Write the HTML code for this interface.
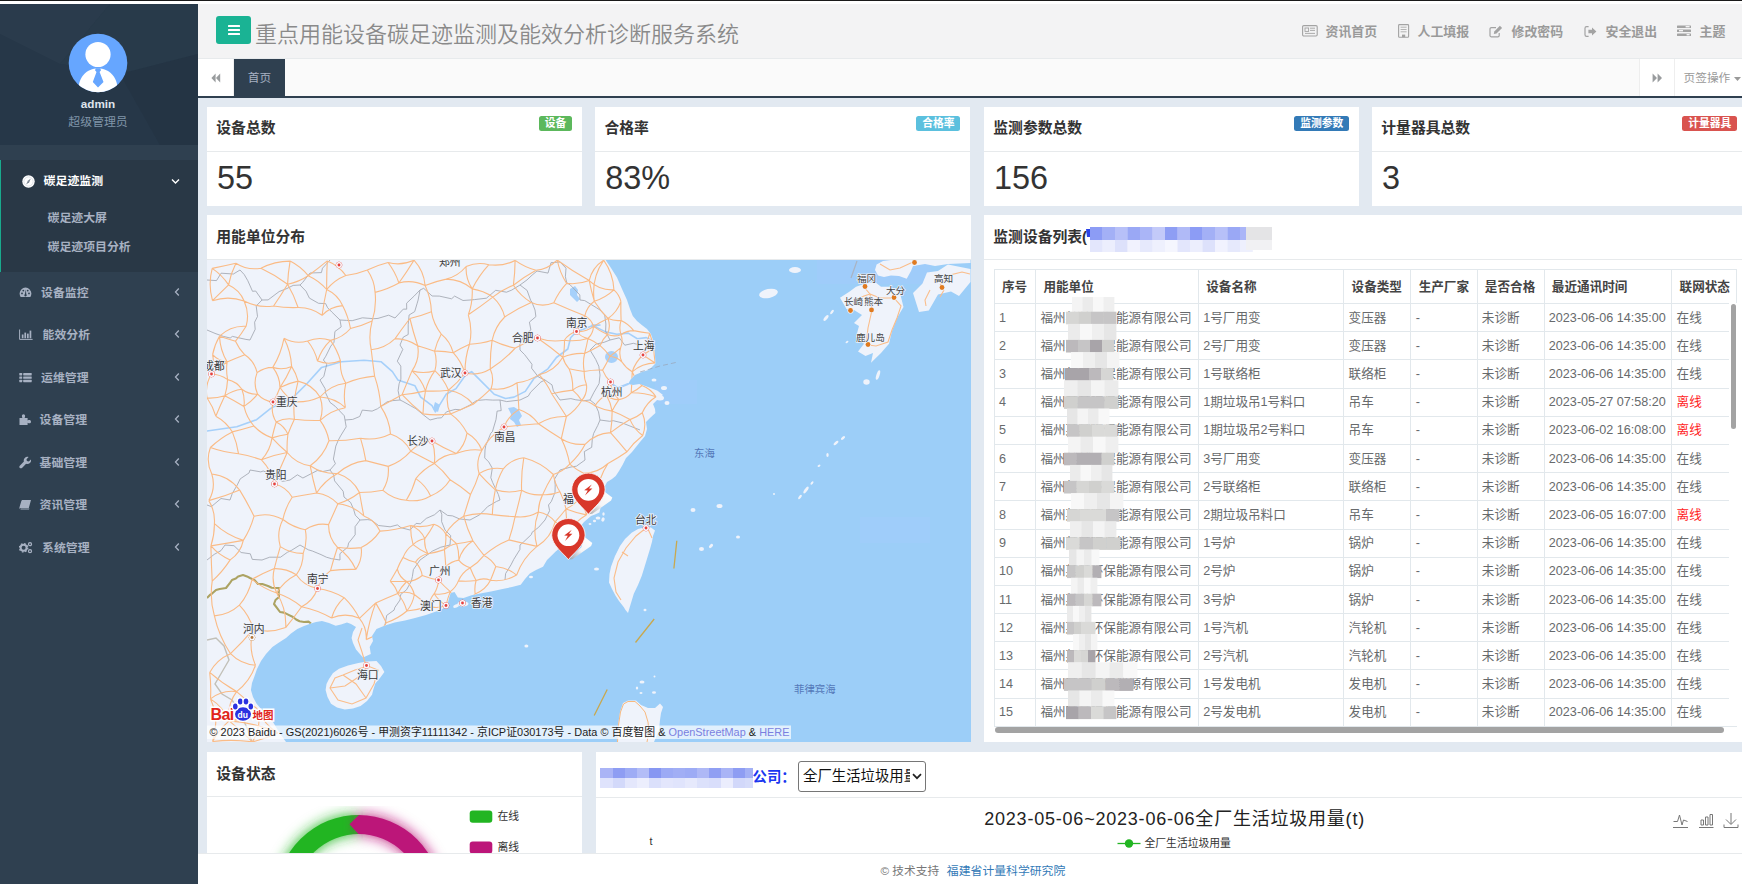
<!DOCTYPE html>
<html lang="zh-CN">
<head>
<meta charset="utf-8">
<title>重点用能设备碳足迹监测及能效分析诊断服务系统</title>
<style>
*{box-sizing:border-box;margin:0;padding:0}
html,body{width:1742px;height:884px;overflow:hidden;background:#fff}
body{font-family:"Liberation Sans","Noto Sans CJK SC",sans-serif;font-size:11.7px;color:#676a6c;position:relative}
.abs{position:absolute}
#topline{left:0;top:0;width:1742px;height:1px;background:#1a1a1a}
#side{left:0;top:4px;width:198px;height:880px;background:#2f4050;overflow:hidden}
#prof{left:0;top:0;width:198px;height:141px;background:#273849;overflow:hidden}
#side .nm{left:0;width:196px;text-align:center;font-size:11.7px;line-height:16px}
.navit{left:0;width:198px;height:42px;line-height:42px;color:#a7b1c2;font-weight:700;font-size:11.9px}
.navit .tx{position:absolute;left:41px;top:0}
.navit svg.ic{position:absolute;left:19px;top:14px}
.navit .arr{position:absolute;left:174px;top:15px}
#act{left:0;top:156.3px;width:198px;height:111.5px;background:#293846;border-left:1.6px solid #19aa8d}
.sub{color:#a7b1c2;font-weight:700;font-size:11.9px;left:48px;line-height:16px}
#hdr{left:198px;top:4px;width:1544px;height:55px;background:#f3f3f4;border-bottom:1px solid #e7eaec}
#ham{left:18px;top:12px;width:35px;height:28px;background:#1ab394;border-radius:3px}
#ham i{position:absolute;left:11.5px;width:12px;height:2.2px;background:#fff;border-radius:.5px}
#ttl{left:57px;top:12.8px;font-size:22px;line-height:36px;color:#8a8a8a;font-weight:350;white-space:nowrap}
.tn{top:17.5px;font-size:12.9px;line-height:20px;font-weight:700;color:#9a9a9a;white-space:nowrap}
.tni{top:0}
#tabs{left:198px;top:59px;width:1544px;height:39px;background:#fafafa;border-bottom:2px solid #2f4050}
#main{left:198px;top:98px;width:1544px;height:755px;background:#e2e9f1;overflow:hidden}
.card{background:#fff}
.ct{font-size:14.8px;font-weight:700;color:#333;line-height:20px;white-space:nowrap}
.hl{height:1px;background:#e7eaec}
.num{font-size:32.4px;line-height:40px;color:#333;font-weight:400;font-family:"Liberation Sans",sans-serif}
.badge{top:9px;height:14.5px;line-height:14.5px;font-size:10.8px;font-weight:700;color:#fff;border-radius:2.5px;padding:0 5.8px;white-space:nowrap}
#foot{left:198px;top:853px;width:1544px;height:31px;background:#fff;border-top:1px solid #e7eaec;font-size:11.7px;line-height:16px}
table{border-collapse:collapse}
th,td{border:1px solid #e2e8ec;white-space:nowrap;overflow:hidden;text-align:left;font-weight:400}
th{height:34px;padding:.8px 0 0 7.3px;font-weight:700;color:#444;line-height:18px}
td{height:28.2px;padding:.2px 0 0 4.3px;color:#676a6c;line-height:18px}
td.off{color:#f22}
</style>
</head>
<body>
<div id="topline" class="abs"></div>
<div id="side" class="abs">
  <div id="prof" class="abs">
    <svg class="abs" style="left:0;top:0" width="198" height="141" viewBox="0 0 198 141">
      <polygon points="0,0 110,0 60,60 0,30" fill="#2a3b4c"/>
      <polygon points="110,0 198,0 198,50 120,70 60,60" fill="#283a4a"/>
      <polygon points="0,30 60,60 120,70 160,141 0,141" fill="#263748"/>
      <polygon points="120,70 198,50 198,141 160,141" fill="#243444"/>
    </svg>
    <svg class="abs" style="left:68px;top:29px" width="60" height="60" viewBox="0 0 60 60">
      <defs><clipPath id="avc"><circle cx="30" cy="30" r="29.3"/></clipPath></defs>
      <circle cx="30" cy="30" r="29.3" fill="#66a6ff"/>
      <g clip-path="url(#avc)">
        <circle cx="30" cy="21.5" r="12.6" fill="#fff"/>
        <path d="M10 60 C10 43 19 35.5 30 35.5 C41 35.5 50 43 50 60 Z" fill="#fff"/>
        <path d="M27.8 35.2 L32.2 35.2 L33 37.3 L31.6 39 L35.5 49 L30 54.5 L24.8 49 L28.5 39 L27 37.3 Z" fill="#66a6ff"/>
      </g>
    </svg>
    <div class="abs nm" style="top:92px;color:#dfe4ed;font-weight:700">admin</div>
    <div class="abs nm" style="top:109.6px;color:#8095a8;font-size:11.9px">超级管理员</div>
  </div>

  <div id="act" class="abs">
    <svg class="abs" style="left:21.4px;top:14.5px" width="13" height="13" viewBox="0 0 13 13"><circle cx="6.5" cy="6.5" r="6.2" fill="#fff"/><circle cx="6.5" cy="6.5" r="4.6" fill="none" stroke="#cfd6dd" stroke-width=".7"/><path d="M8.8 3.6 L7.2 7.2 L4.2 9.4 L5.8 5.8 Z" fill="#7d8894"/></svg>
    <div class="abs" style="left:42.6px;top:13px;line-height:16px;color:#fff;font-weight:700;font-size:11.9px">碳足迹监测</div>
    <svg class="abs" style="left:170px;top:17.5px" width="9" height="7" viewBox="0 0 9 7"><path d="M1 1.5 L4.5 5 L8 1.5" fill="none" stroke="#fff" stroke-width="1.4"/></svg>
    <div class="abs sub" style="left:46.5px;top:49.6px">碳足迹大屏</div>
    <div class="abs sub" style="left:46.5px;top:78.6px">碳足迹项目分析</div>
  </div>

  <div class="abs navit" style="top:267.6px">
    <svg class="ic" width="13" height="13" viewBox="0 0 13 13"><path d="M6.5 1.6 A6 6 0 0 0 .6 7.6 C.6 8.9 1 10 1.6 11 L11.4 11 C12 10 12.4 8.9 12.4 7.6 A6 6 0 0 0 6.5 1.6 Z" fill="#a7b1c2"/><circle cx="3" cy="7.4" r=".9" fill="#2f4050"/><circle cx="4.3" cy="4.6" r=".9" fill="#2f4050"/><circle cx="10" cy="7.4" r=".9" fill="#2f4050"/><circle cx="8.7" cy="4.6" r=".9" fill="#2f4050"/><path d="M6.8 3.4 L5.9 8.2 A1.2 1.2 0 1 0 7.3 8.3 Z" fill="#2f4050"/></svg>
    <span class="tx">设备监控</span>
    <svg class="arr" width="6" height="10" viewBox="0 0 6 10"><path d="M4.8 1.5 L1.5 5 L4.8 8.5" fill="none" stroke="#a7b1c2" stroke-width="1.3"/></svg>
  </div>
  <div class="abs navit" style="top:310.1px">
    <svg class="ic" width="14" height="13" viewBox="0 0 14 13"><path d="M.6 1.5 V11.4 H13.6" fill="none" stroke="#a7b1c2" stroke-width="1"/><rect x="2.8" y="6.5" width="1.7" height="3.8" fill="#a7b1c2"/><rect x="5.4" y="4.6" width="1.7" height="5.7" fill="#a7b1c2"/><rect x="8" y="5.6" width="1.7" height="4.7" fill="#a7b1c2"/><rect x="10.6" y="2.6" width="1.7" height="7.7" fill="#a7b1c2"/></svg>
    <span class="tx" style="left:42.5px">能效分析</span>
    <svg class="arr" width="6" height="10" viewBox="0 0 6 10"><path d="M4.8 1.5 L1.5 5 L4.8 8.5" fill="none" stroke="#a7b1c2" stroke-width="1.3"/></svg>
  </div>
  <div class="abs navit" style="top:352.6px">
    <svg class="ic" width="13" height="13" viewBox="0 0 13 13"><g fill="#a7b1c2"><rect x=".3" y="2" width="2.9" height="2.4" rx=".4"/><rect x="4.2" y="2" width="8.5" height="2.4" rx=".4"/><rect x=".3" y="5.4" width="2.9" height="2.4" rx=".4"/><rect x="4.2" y="5.4" width="8.5" height="2.4" rx=".4"/><rect x=".3" y="8.8" width="2.9" height="2.4" rx=".4"/><rect x="4.2" y="8.8" width="8.5" height="2.4" rx=".4"/></g></svg>
    <span class="tx">运维管理</span>
    <svg class="arr" width="6" height="10" viewBox="0 0 6 10"><path d="M4.8 1.5 L1.5 5 L4.8 8.5" fill="none" stroke="#a7b1c2" stroke-width="1.3"/></svg>
  </div>
  <div class="abs navit" style="top:395.1px">
    <svg class="ic" width="13" height="13" viewBox="0 0 13 13"><path d="M.5 5 H3.4 C3 4.2 2.9 3.6 2.9 3.1 C2.9 2 3.6 1.3 4.5 1.3 C5.4 1.3 6.1 2 6.1 3.1 C6.1 3.6 6 4.2 5.6 5 H8.6 V7.6 C9.3 7.2 9.8 7.1 10.3 7.1 C11.3 7.1 12 7.8 12 8.7 C12 9.6 11.3 10.3 10.3 10.3 C9.8 10.3 9.3 10.2 8.6 9.8 V12 H.5 Z" fill="#a7b1c2"/></svg>
    <span class="tx" style="left:39.5px">设备管理</span>
    <svg class="arr" width="6" height="10" viewBox="0 0 6 10"><path d="M4.8 1.5 L1.5 5 L4.8 8.5" fill="none" stroke="#a7b1c2" stroke-width="1.3"/></svg>
  </div>
  <div class="abs navit" style="top:437.6px">
    <svg class="ic" width="13" height="13" viewBox="0 0 13 13"><path d="M11.9 3.4 L9.8 5.5 L7.9 5.1 L7.5 3.2 L9.6 1.1 C8.3 .6 6.8 .9 5.8 1.9 C4.8 2.9 4.5 4.3 4.9 5.6 L.8 9.7 C.2 10.3 .2 11.3 .8 11.9 C1.4 12.5 2.4 12.5 3 11.9 L7.1 7.8 C8.4 8.3 9.9 8 10.9 7 C12 6 12.3 4.6 11.9 3.4 Z" fill="#a7b1c2"/></svg>
    <span class="tx" style="left:39.5px">基础管理</span>
    <svg class="arr" width="6" height="10" viewBox="0 0 6 10"><path d="M4.8 1.5 L1.5 5 L4.8 8.5" fill="none" stroke="#a7b1c2" stroke-width="1.3"/></svg>
  </div>
  <div class="abs navit" style="top:480.1px">
    <svg class="ic" width="13" height="13" viewBox="0 0 13 13"><path d="M3.6 2 H12 L9.8 10 H2.2 C1.2 10 .7 10.6 .9 11.2 L.5 10.6 C.2 9.9 .4 9.2 .7 8.4 L2.2 3.4 C2.4 2.6 2.9 2 3.6 2 Z M1.6 11.6 H10 L10.4 10.6 H2.2 C1.6 10.6 1.4 11 1.6 11.6 Z" fill="#a7b1c2"/></svg>
    <span class="tx" style="left:39.5px">资讯管理</span>
    <svg class="arr" width="6" height="10" viewBox="0 0 6 10"><path d="M4.8 1.5 L1.5 5 L4.8 8.5" fill="none" stroke="#a7b1c2" stroke-width="1.3"/></svg>
  </div>
  <div class="abs navit" style="top:522.6px">
    <svg class="ic" width="14" height="13" viewBox="0 0 14 13"><circle cx="4.6" cy="6.8" r="3" fill="none" stroke="#a7b1c2" stroke-width="2"/><circle cx="4.6" cy="6.8" r="4.2" fill="none" stroke="#a7b1c2" stroke-width="1.3" stroke-dasharray="1.6 1.7"/><circle cx="11" cy="3.2" r="1.5" fill="none" stroke="#a7b1c2" stroke-width="1.3"/><circle cx="11" cy="10.2" r="1.5" fill="none" stroke="#a7b1c2" stroke-width="1.3"/></svg>
    <span class="tx" style="left:42px">系统管理</span>
    <svg class="arr" width="6" height="10" viewBox="0 0 6 10"><path d="M4.8 1.5 L1.5 5 L4.8 8.5" fill="none" stroke="#a7b1c2" stroke-width="1.3"/></svg>
  </div>
</div>
<div id="hdr" class="abs">
  <div id="ham" class="abs"><i style="top:8.6px"></i><i style="top:12.9px"></i><i style="top:17.2px"></i></div>
  <div id="ttl" class="abs">重点用能设备碳足迹监测及能效分析诊断服务系统</div>

  <svg class="abs" style="left:1104px;top:21px" width="16" height="12" viewBox="0 0 16 12"><rect x=".6" y=".6" width="14.6" height="10.4" rx="1.2" fill="none" stroke="#a3a3a3" stroke-width="1.1"/><rect x="3" y="3" width="3.6" height="3.4" fill="none" stroke="#a3a3a3" stroke-width=".9"/><path d="M8 3.2 H13 M8 5.4 H13 M3 8.4 H13" stroke="#a3a3a3" stroke-width=".9"/></svg>
  <div class="abs tn" style="left:1127.5px">资讯首页</div>
  <svg class="abs" style="left:1199.5px;top:20px" width="12" height="14" viewBox="0 0 12 14"><rect x=".6" y=".6" width="10" height="12.6" rx=".8" fill="none" stroke="#a3a3a3" stroke-width="1.1"/><path d="M2.6 3.2 H8.6 M2.6 5.5 H8.6 M2.6 7.8 H8.6" stroke="#a3a3a3" stroke-width=".8"/><rect x="4" y="10.6" width="3.2" height="2.6" fill="#a3a3a3"/></svg>
  <div class="abs tn" style="left:1219.5px">人工填报</div>
  <svg class="abs" style="left:1291px;top:20.5px" width="14" height="13" viewBox="0 0 14 13"><path d="M10.2 8 V10.4 C10.2 11.2 9.6 11.8 8.8 11.8 H2.4 C1.6 11.8 1 11.2 1 10.4 V4 C1 3.2 1.6 2.6 2.4 2.6 H7" fill="none" stroke="#a3a3a3" stroke-width="1.2"/><path d="M4.8 9 L5.3 6.4 L10.9 .8 L13.1 3 L7.5 8.6 Z" fill="#a3a3a3"/></svg>
  <div class="abs tn" style="left:1313.5px">修改密码</div>
  <svg class="abs" style="left:1385.5px;top:20.5px" width="13" height="13" viewBox="0 0 13 13"><path d="M4.6 1.6 H2.6 C1.7 1.6 1 2.3 1 3.2 V9.8 C1 10.7 1.7 11.4 2.6 11.4 H4.6" fill="none" stroke="#a3a3a3" stroke-width="1.2"/><path d="M4.4 4.8 H8 V2.4 L12.4 6.5 L8 10.6 V8.2 H4.4 Z" fill="#a3a3a3"/></svg>
  <div class="abs tn" style="left:1407.5px">安全退出</div>
  <svg class="abs" style="left:1479px;top:21px" width="14" height="12" viewBox="0 0 14 12"><g fill="#a3a3a3"><rect x="0" y=".4" width="14" height="2.6" rx=".5"/><rect x="0" y="4.4" width="14" height="2.6" rx=".5"/><rect x="0" y="8.4" width="14" height="2.6" rx=".5"/></g><g fill="#f3f3f4"><rect x="8.6" y="1" width="4" height="1.4"/><rect x="2" y="5" width="4" height="1.4"/><rect x="9.6" y="9" width="3" height="1.4"/></g></svg>
  <div class="abs tn" style="left:1501.5px">主题</div>
</div>

<div id="tabs" class="abs">
  <div class="abs" style="left:0;top:0;width:36px;height:37px;background:#fff;border-right:1px solid #f0f0f0"></div>
  <svg class="abs" style="left:13px;top:13.5px" width="10" height="10" viewBox="0 0 10 10"><path d="M4.6 .6 V9.4 L.4 5 Z M9.2 .6 V9.4 L5 5 Z" fill="#999c9e"/></svg>
  <div class="abs" style="left:36px;top:0;width:51px;height:37px;background:#2f4050;color:#a7b1c2;font-size:11.7px;line-height:37px;text-align:center">首页</div>
  <div class="abs" style="left:1441px;top:0;width:36px;height:37px;background:#fff;border-left:1px solid #eee;border-right:1px solid #eee"></div>
  <svg class="abs" style="left:1453.5px;top:13.5px" width="11" height="10" viewBox="0 0 11 10"><path d="M.6 .6 L5 5 L.6 9.4 Z M5.6 .6 L10 5 L5.6 9.4 Z" fill="#999c9e"/></svg>
  <div class="abs" style="left:1477px;top:0;width:67px;height:37px;background:#fff"></div>
  <div class="abs" style="left:1485.5px;top:11px;font-size:11.7px;line-height:16px;color:#999;white-space:nowrap">页签操作</div>
  <svg class="abs" style="left:1535.5px;top:17.5px" width="7" height="4" viewBox="0 0 7 4"><path d="M0 0 H7 L3.5 4 Z" fill="#999"/></svg>
</div>
<div id="main" class="abs">
<div class="abs card" style="left:9.0px;top:9px;width:375px;height:99px"><div class="abs ct" style="left:9.3px;top:11.3px">设备总数</div><div class="abs badge" style="right:9.8px;background:#5cb85c">设备</div><div class="abs hl" style="left:0;top:43.5px;width:375px"></div><div class="abs num" style="left:10px;top:50.5px">55</div></div>
<div class="abs card" style="left:397.2px;top:9px;width:375px;height:99px"><div class="abs ct" style="left:9.3px;top:11.3px">合格率</div><div class="abs badge" style="right:9.8px;background:#5bc0de">合格率</div><div class="abs hl" style="left:0;top:43.5px;width:375px"></div><div class="abs num" style="left:10px;top:50.5px">83%</div></div>
<div class="abs card" style="left:786.0px;top:9px;width:375px;height:99px"><div class="abs ct" style="left:9.3px;top:11.3px">监测参数总数</div><div class="abs badge" style="right:9.8px;background:#337ab7">监测参数</div><div class="abs hl" style="left:0;top:43.5px;width:375px"></div><div class="abs num" style="left:10px;top:50.5px">156</div></div>
<div class="abs card" style="left:1174.0px;top:9px;width:375px;height:99px"><div class="abs ct" style="left:9.3px;top:11.3px">计量器具总数</div><div class="abs badge" style="right:9.8px;background:#d9534f">计量器具</div><div class="abs hl" style="left:0;top:43.5px;width:375px"></div><div class="abs num" style="left:10px;top:50.5px">3</div></div>
<div class="abs card" style="left:9px;top:117px;width:763.5px;height:527px">
<div class="abs ct" style="left:9.3px;top:12.4px">用能单位分布</div>
<div class="abs hl" style="left:0;top:43.5px;width:764px"></div>
<svg class="abs" style="left:0;top:45px" width="763.5" height="482" viewBox="207 260 763.5 482" font-family="Liberation Sans,Noto Sans CJK SC,sans-serif">
<defs><linearGradient id="shg" x1="1" y1="0" x2="0" y2="1"><stop offset="0" stop-color="#fff"/><stop offset=".55" stop-color="#f4f4f6"/><stop offset="1" stop-color="#9a9a9a" stop-opacity=".75"/></linearGradient></defs>
<defs><clipPath id="landclip"><polygon points="207.0,260.0 605.6,260.0 611.0,268.0 617.0,277.6 622.0,289.0 627.0,300.0 630.0,309.0 632.8,316.0 637.0,321.0 641.8,325.0 647.0,329.0 650.9,334.0 653.0,340.0 654.0,345.5 655.0,355.0 655.4,363.6 652.0,367.0 648.6,370.0 642.0,372.0 635.0,375.0 631.0,379.0 628.0,384.0 633.0,385.0 639.5,384.0 648.0,387.0 657.6,390.7 663.0,395.0 658.0,399.0 653.0,404.0 655.0,409.0 655.4,413.0 650.0,418.0 646.0,422.0 647.0,429.0 645.0,436.0 640.0,442.0 636.0,447.0 632.0,452.0 626.0,458.0 622.5,465.0 619.0,471.0 615.7,476.0 612.0,479.0 607.0,482.0 604.0,488.0 603.0,497.0 601.0,506.0 599.4,512.5 595.0,514.5 591.0,516.0 587.5,519.0 584.0,522.0 580.0,527.0 575.0,533.0 569.0,539.0 562.0,546.0 555.4,551.7 551.9,555.3 547.0,560.0 543.0,566.7 536.0,570.0 529.8,573.5 525.0,579.0 520.7,584.8 512.0,587.0 502.6,589.0 491.0,591.6 482.8,593.0 471.5,595.2 463.6,598.0 457.9,597.5 454.5,591.9 450.7,593.0 448.9,598.6 447.7,604.3 442.0,609.3 437.5,611.0 426.0,615.0 415.0,618.0 405.0,620.5 394.6,622.4 385.0,625.5 376.5,629.0 372.0,636.0 373.0,641.0 369.7,647.0 370.8,654.0 363.0,657.5 359.0,653.0 356.0,649.5 353.0,643.0 351.6,638.0 353.0,632.0 356.0,627.0 351.0,624.0 347.0,622.4 341.0,624.5 335.7,625.8 329.0,623.0 322.0,621.0 316.0,622.0 310.9,623.5 304.0,626.0 297.3,629.0 291.0,633.5 286.0,638.0 279.0,642.5 272.4,647.0 266.0,654.0 261.0,660.9 257.0,669.0 254.3,676.7 252.0,683.0 250.9,690.0 253.0,697.0 256.6,703.8 262.0,710.0 267.9,715.0 273.0,722.0 277.0,728.7 281.0,735.0 286.0,742.0 207.0,742.0"/></clipPath></defs>
<rect x="207" y="260" width="764" height="482" fill="#9ccef8"/>
<rect x="817" y="260" width="114" height="24" fill="#a2ccfb" opacity=".6"/><rect x="860" y="517" width="70" height="26" fill="#a2ccfb" opacity=".5"/><rect x="655" y="380" width="42" height="24" fill="#a2ccfb" opacity=".5"/>
<polygon points="207.0,260.0 605.6,260.0 611.0,268.0 617.0,277.6 622.0,289.0 627.0,300.0 630.0,309.0 632.8,316.0 637.0,321.0 641.8,325.0 647.0,329.0 650.9,334.0 653.0,340.0 654.0,345.5 655.0,355.0 655.4,363.6 652.0,367.0 648.6,370.0 642.0,372.0 635.0,375.0 631.0,379.0 628.0,384.0 633.0,385.0 639.5,384.0 648.0,387.0 657.6,390.7 663.0,395.0 658.0,399.0 653.0,404.0 655.0,409.0 655.4,413.0 650.0,418.0 646.0,422.0 647.0,429.0 645.0,436.0 640.0,442.0 636.0,447.0 632.0,452.0 626.0,458.0 622.5,465.0 619.0,471.0 615.7,476.0 612.0,479.0 607.0,482.0 604.0,488.0 603.0,497.0 601.0,506.0 599.4,512.5 595.0,514.5 591.0,516.0 587.5,519.0 584.0,522.0 580.0,527.0 575.0,533.0 569.0,539.0 562.0,546.0 555.4,551.7 551.9,555.3 547.0,560.0 543.0,566.7 536.0,570.0 529.8,573.5 525.0,579.0 520.7,584.8 512.0,587.0 502.6,589.0 491.0,591.6 482.8,593.0 471.5,595.2 463.6,598.0 457.9,597.5 454.5,591.9 450.7,593.0 448.9,598.6 447.7,604.3 442.0,609.3 437.5,611.0 426.0,615.0 415.0,618.0 405.0,620.5 394.6,622.4 385.0,625.5 376.5,629.0 372.0,636.0 373.0,641.0 369.7,647.0 370.8,654.0 363.0,657.5 359.0,653.0 356.0,649.5 353.0,643.0 351.6,638.0 353.0,632.0 356.0,627.0 351.0,624.0 347.0,622.4 341.0,624.5 335.7,625.8 329.0,623.0 322.0,621.0 316.0,622.0 310.9,623.5 304.0,626.0 297.3,629.0 291.0,633.5 286.0,638.0 279.0,642.5 272.4,647.0 266.0,654.0 261.0,660.9 257.0,669.0 254.3,676.7 252.0,683.0 250.9,690.0 253.0,697.0 256.6,703.8 262.0,710.0 267.9,715.0 273.0,722.0 277.0,728.7 281.0,735.0 286.0,742.0 207.0,742.0" fill="#eff3fb"/>
<polygon points="646.3,527.0 651.0,527.5 655.0,530.5 653.0,536.0 652.0,541.8 650.0,549.0 647.4,557.6 644.5,567.0 641.8,575.7 638.0,585.0 633.8,593.8 631.0,603.0 628.0,613.0 625.5,610.0 623.7,607.0 619.0,601.0 615.7,596.0 612.0,589.0 609.0,582.5 609.5,574.0 611.0,566.7 615.0,556.0 620.0,546.0 625.0,539.0 631.6,532.8 638.0,529.0" fill="#eff3fb"/>
<polygon points="339.0,668.8 348.0,665.5 358.4,663.0 367.0,661.5 376.5,660.9 381.0,666.0 384.4,672.0 380.0,678.0 375.3,683.5 373.5,689.0 372.0,694.8 367.0,701.0 360.6,706.0 353.0,708.5 344.8,709.5 337.0,707.5 331.0,703.8 327.5,697.0 325.6,690.0 326.5,684.0 329.0,679.0 333.0,673.0" fill="#eff3fb"/>
<polygon points="856.0,286.7 865.5,283.5 875.0,282.0 881.0,286.7 890.8,286.7 900.0,293.0 903.5,307.0 897.0,318.0 892.0,331.0 889.0,343.7 881.0,353.0 871.0,362.7 873.0,353.0 865.5,356.0 858.0,351.6 864.0,343.7 856.0,337.0 859.0,326.0 854.0,323.0 862.0,315.0 854.0,310.0 846.5,309.0 840.0,297.8 849.7,291.4" fill="#eff3fb"/>
<polygon points="876.6,264.5 883.0,261.0 890.8,260.0 970.5,260.0 970.5,263.0 948.0,264.0 935.0,266.0 925.0,264.0 913.0,266.0 911.0,271.0 906.7,278.8 899.0,276.0 891.0,275.6 884.0,277.0 878.0,275.6 875.0,270.0" fill="#eff3fb"/>
<polygon points="927.0,272.4 938.0,271.0 947.9,264.5 970.5,269.0 970.5,282.0 959.0,296.0 951.0,291.4 938.0,294.6 928.8,310.4 919.0,312.0 916.0,302.5 913.0,293.0 922.5,283.5" fill="#eff3fb"/>
<ellipse cx="768.5" cy="293.5" rx="9.5" ry="4.5" fill="#eff3fb" transform="rotate(-12 768.5 293.5)"/>
<ellipse cx="795" cy="270" rx="6" ry="3" fill="#eff3fb" transform="rotate(0 795 270)"/>
<ellipse cx="660" cy="398" rx="4" ry="2.5" fill="#eff3fb" transform="rotate(0 660 398)"/>
<ellipse cx="664" cy="388" rx="3" ry="2" fill="#eff3fb" transform="rotate(0 664 388)"/>
<ellipse cx="654" cy="380" rx="2.5" ry="1.5" fill="#eff3fb" transform="rotate(0 654 380)"/>
<ellipse cx="667" cy="403" rx="2.5" ry="2" fill="#eff3fb" transform="rotate(0 667 403)"/>
<ellipse cx="847" cy="342" rx="1.6" ry="1" fill="#eff3fb" transform="rotate(-35 847 342)"/>
<ellipse cx="826" cy="318" rx="3.5" ry="1.5" fill="#eff3fb" transform="rotate(-50 826 318)"/>
<ellipse cx="832" cy="312" rx="2.5" ry="1.2" fill="#eff3fb" transform="rotate(-50 832 312)"/>
<ellipse cx="866.5" cy="382" rx="3.2" ry="2.8" fill="#eff3fb" transform="rotate(0 866.5 382)"/>
<ellipse cx="878" cy="375" rx="5" ry="1.6" fill="#eff3fb" transform="rotate(-72 878 375)"/>
<ellipse cx="693" cy="510" rx="2.5" ry="2" fill="#eff3fb" transform="rotate(0 693 510)"/>
<ellipse cx="719.5" cy="506" rx="3" ry="2" fill="#eff3fb" transform="rotate(0 719.5 506)"/>
<ellipse cx="701.5" cy="549" rx="2.5" ry="2" fill="#eff3fb" transform="rotate(0 701.5 549)"/>
<ellipse cx="711" cy="546" rx="2.5" ry="1.5" fill="#eff3fb" transform="rotate(-45 711 546)"/>
<ellipse cx="738" cy="537" rx="2" ry="1.5" fill="#eff3fb" transform="rotate(0 738 537)"/>
<ellipse cx="596.5" cy="569" rx="2.5" ry="1.5" fill="#eff3fb" transform="rotate(0 596.5 569)"/>
<ellipse cx="526.4" cy="646" rx="2" ry="1.5" fill="#eff3fb" transform="rotate(0 526.4 646)"/>
<ellipse cx="645" cy="610" rx="1.5" ry="1.2" fill="#eff3fb" transform="rotate(0 645 610)"/>
<ellipse cx="836" cy="443" rx="3" ry="1.3" fill="#eff3fb" transform="rotate(-40 836 443)"/>
<ellipse cx="843" cy="438" rx="2.5" ry="1.2" fill="#eff3fb" transform="rotate(-40 843 438)"/>
<ellipse cx="827.5" cy="455" rx="1.2" ry="2" fill="#eff3fb" transform="rotate(0 827.5 455)"/>
<ellipse cx="819" cy="465.8" rx="1.6" ry="1" fill="#eff3fb" transform="rotate(-30 819 465.8)"/>
<ellipse cx="774" cy="494" rx="1" ry="1" fill="#eff3fb" transform="rotate(0 774 494)"/>
<ellipse cx="800" cy="497" rx="2.5" ry="1.2" fill="#eff3fb" transform="rotate(-50 800 497)"/>
<ellipse cx="806" cy="490" rx="4" ry="1.5" fill="#eff3fb" transform="rotate(-55 806 490)"/>
<ellipse cx="812" cy="483" rx="2" ry="1" fill="#eff3fb" transform="rotate(-50 812 483)"/>
<ellipse cx="598" cy="518" rx="2.4" ry="1.6" fill="#eff3fb" transform="rotate(0 598 518)"/>
<ellipse cx="603" cy="519.5" rx="1.6" ry="2.2" fill="#eff3fb" transform="rotate(20 603 519.5)"/>
<ellipse cx="594.5" cy="521" rx="1.6" ry="1.2" fill="#eff3fb" transform="rotate(0 594.5 521)"/>
<ellipse cx="590" cy="524" rx="1.4" ry="1" fill="#eff3fb" transform="rotate(0 590 524)"/>
<ellipse cx="603.5" cy="514" rx="1.2" ry="1.8" fill="#eff3fb" transform="rotate(0 603.5 514)"/>
<ellipse cx="531" cy="577" rx="2" ry="1.2" fill="#eff3fb" transform="rotate(0 531 577)"/>
<ellipse cx="463" cy="603.8" rx="5.5" ry="2.6" fill="#eff3fb" transform="rotate(0 463 603.8)"/>
<ellipse cx="456" cy="606" rx="3" ry="1.6" fill="#eff3fb" transform="rotate(-20 456 606)"/>
<polygon points="617,742 618,725 620,712 623,703 628,700.5 636,700.5 641,705 648,708 655,708 660,703.5 663,707 661,713 660,720 659,730 654,742" fill="#eff3fb"/>
<path d="M617.5 742 L618.5 725 L620.5 712 L623.5 704 L628 701.5 L635 701.5 L640 706 L645 712 L648 722 L649 732 L647 742" fill="none" stroke="#f8b97f" stroke-width="1"/>
<ellipse cx="642" cy="682" rx="2.5" ry="1.6" fill="#eff3fb"/>
<ellipse cx="654" cy="692.5" rx="2" ry="1.2" fill="#eff3fb"/>
<ellipse cx="641" cy="693" rx="1.5" ry="1" fill="#eff3fb"/>
<ellipse cx="637" cy="688" rx="1.2" ry="1.5" fill="#eff3fb"/>
<ellipse cx="654.5" cy="676.5" rx="1" ry="1" fill="#eff3fb"/>
<g fill="none" stroke="#a6d0fa" stroke-linecap="round" stroke-linejoin="round">
<path d="M207.1 431.0 L236.8 426.8 L256.6 419.7 L270.7 408.4 L293.4 397.1 L307.5 383.0 L321.6 367.4 L341.4 361.7 L364.1 360.3 L381.0 361.7 L392.4 371.6 L398.0 380.1 L415.0 385.8 L420.7 397.1 L432.0 405.6 L435.4 411.8 L446.1 394.3 L456.0 388.6 L465.9 374.5 L471.6 371.6 L480.1 380.1 L494.2 394.3 L505.5 398.5 L514.0 397.1 L525.3 391.4 L533.8 378.7 L547.9 368.8 L556.4 357.5 L567.8 349.0 L570.6 337.7 L576.2 332.0 L590.4 326.4 L600.0 325.0 L592.0 325.1 L605.6 331.9 L616.9 334.2 L628.2 333.1 L637.3 338.7 L646.3 337.6 L653.1 341.0" stroke-width="1.6"/>
<path d="M609 382 L618 388 L628 384" stroke-width="2"/>
</g>
<g fill="#a6d0fa"><ellipse cx="611.5" cy="357" rx="6.5" ry="6"/><path d="M570 289 l5 -3 l3 4 l-1 5 l3 4 l-3 3 l-4 -4 l-3 -3 z"/><path d="M508 408 l6 -1 l5 3 l3 6 l-3 4 l2 5 l-4 2 l-3 -5 l-4 -3 l1 -5 z"/><path d="M435 402 l5 3 l-2 7 l-5 -3 z"/></g>
<g clip-path="url(#landclip)">
<path d="M207.0 330.0 L215.0 333.4 L223.4 336.4 L230.2 338.0 L232.4 336.4 L245.9 339.4 L250.0 340.0 L255.2 329.3 L254.6 322.2 L257.5 316.5 L256.2 306.0 L262.0 300.0 L268.1 299.9 L279.1 291.6 L286.9 288.5 L293.2 285.4 L300.0 285.0 L302.5 282.6 L310.0 273.0 L321.4 272.6 L322.5 268.2 L330.0 260.0" fill="none" stroke="#a2a6b0" stroke-width=".85"/>
<path d="M300.0 285.0 L306.0 291.2 L309.4 298.1 L318.5 303.3 L325.6 303.6 L327.6 307.7 L331.8 312.0 L340.0 320.0 L346.5 320.4 L352.2 320.7 L362.4 317.8 L373.7 318.7 L378.0 318.4 L388.6 315.2 L395.0 318.0 L403.3 309.1 L406.7 309.2 L406.6 303.2 L414.1 296.1 L420.0 290.0 L423.7 288.3 L432.1 296.0 L439.3 296.1 L451.6 298.8 L454.6 296.1 L463.0 300.5 L470.0 300.0 L474.4 299.6 L486.4 298.2 L488.2 296.7 L495.7 290.3 L506.5 292.2 L511.7 290.1 L520.0 285.0 L527.0 279.9 L532.1 275.1 L537.0 271.0 L548.0 273.1 L551.0 262.7 L560.0 262.0" fill="none" stroke="#a2a6b0" stroke-width=".85"/>
<path d="M340.0 320.0 L341.2 326.9 L334.9 331.5 L334.0 342.3 L330.8 346.1 L325.8 356.2 L323.4 360.0 L326.8 364.1 L323.8 376.5 L320.0 380.0 L325.1 388.7 L325.6 392.9 L330.0 402.4 L335.2 406.3 L344.3 415.8 L345.0 420.0 L346.2 426.8 L340.6 435.9 L338.4 440.0 L335.8 446.1 L333.4 459.1 L335.4 463.7 L330.0 470.0 L333.7 475.1 L334.6 480.9 L343.2 491.3 L344.0 497.0 L350.7 502.6 L353.6 509.3 L355.3 515.2 L360.0 520.0 L355.1 526.6 L355.2 534.7 L348.6 543.1 L347.7 547.2 L339.9 553.7 L340.0 560.0 L331.6 558.7 L326.4 557.2 L321.0 554.6 L312.3 551.0 L308.3 549.8 L300.0 545.0 L291.4 550.4 L287.4 552.3 L280.5 557.2 L269.7 557.2 L262.0 560.0 L252.3 559.4 L250.3 553.8 L241.1 552.5 L234.0 545.7 L225.0 545.0 L221.0 550.6 L214.2 554.4 L207.0 560.0" fill="none" stroke="#a2a6b0" stroke-width=".85"/>
<path d="M345.0 420.0 L352.7 419.4 L359.7 416.5 L362.3 410.1 L372.1 411.1 L377.4 408.8 L387.2 401.8 L392.9 400.6 L400.0 400.0 L402.9 401.4 L410.7 405.8 L415.9 408.7 L423.8 415.2 L430.0 420.0 L437.4 418.1 L441.5 417.8 L446.5 411.8 L455.1 409.4 L460.6 409.8 L470.0 405.0 L476.6 400.5 L485.8 399.7 L492.8 400.1 L500.0 400.0" fill="none" stroke="#a2a6b0" stroke-width=".85"/>
<path d="M420.0 290.0 L418.1 300.1 L417.2 303.2 L414.7 311.6 L409.1 315.0 L408.2 324.8 L408.2 334.5 L403.3 337.1 L400.0 345.0 L402.8 349.4 L397.3 361.2 L400.8 366.1 L400.9 379.2 L399.1 383.8 L398.1 390.7 L400.0 400.0" fill="none" stroke="#a2a6b0" stroke-width=".85"/>
<path d="M520.0 285.0 L527.1 290.4 L530.7 300.4 L531.9 302.1 L535.0 310.0 L535.9 316.6 L529.4 322.1 L530.9 329.9 L523.5 336.5 L519.9 344.2 L520.0 350.0 L524.6 354.6 L532.0 364.3 L531.6 368.2 L538.4 377.0 L545.0 380.0 L552.0 384.9 L553.4 390.9 L560.0 400.0 L570.9 398.6 L575.8 399.8 L583.5 400.7 L590.0 400.0 L595.0 404.0 L598.5 411.9 L600.0 420.0 L597.7 425.5 L593.6 433.5 L592.3 439.0 L591.7 447.3 L584.3 451.6 L585.0 460.0 L576.4 466.2 L571.0 467.0 L560.0 470.0 L554.5 479.1 L555.2 484.8 L555.0 492.4 L551.3 501.5 L548.5 505.0 L549.6 510.7 L545.0 520.0 L538.6 527.3 L532.0 532.4 L531.4 534.5 L523.5 542.0 L520.0 545.0 L519.9 549.5 L513.8 559.3 L511.0 564.8 L505.6 573.6 L505.0 580.0" fill="none" stroke="#a2a6b0" stroke-width=".85"/>
<path d="M545.0 380.0 L540.9 382.0 L530.6 392.2 L528.3 396.1 L520.0 400.0 L506.7 401.6 L500.0 400.0 L501.2 410.6 L497.1 411.1 L496.0 419.5 L492.4 431.7 L490.8 433.2 L485.7 445.8 L485.0 450.0 L484.7 457.9 L488.7 461.9 L492.3 468.2 L490.8 477.7 L492.7 482.6 L498.4 494.6 L500.0 500.0 L496.6 501.4 L487.5 506.7 L482.7 511.9 L479.1 515.1 L470.0 520.0 L459.4 518.9 L452.6 515.9 L447.5 515.4 L440.0 510.0 L434.4 514.8 L426.3 518.4 L420.3 523.8 L416.1 523.4 L410.0 530.0 L401.0 527.7 L397.4 524.9 L390.1 526.8 L378.5 525.5 L371.4 520.2 L367.8 519.6 L360.0 520.0" fill="none" stroke="#a2a6b0" stroke-width=".85"/>
<path d="M560.0 262.0 L566.0 268.2 L565.4 276.7 L566.7 282.6 L570.2 284.9 L579.8 294.9 L580.0 300.0 L584.7 300.6 L596.6 307.8 L600.0 310.0 L604.7 315.0 L605.9 324.0 L605.6 331.3 L610.0 340.0 L604.1 342.3 L595.9 344.1 L590.0 350.0 L595.7 359.4 L598.8 366.2 L600.0 375.0 L599.1 383.5 L594.0 392.2 L590.0 400.0" fill="none" stroke="#a2a6b0" stroke-width=".85"/>
<path d="M600.0 420.0 L609.7 421.3 L613.2 420.7 L621.9 422.8 L634.7 427.9 L640.0 430.0" fill="none" stroke="#a2a6b0" stroke-width=".85"/>
<path d="M610.0 340.0 L619.3 337.8 L624.8 345.2 L633.3 343.3 L640.0 345.0" fill="none" stroke="#a2a6b0" stroke-width=".85"/>
<path d="M440.0 510.0 L441.8 514.2 L441.6 521.6 L445.1 530.2 L450.7 535.6 L450.0 545.0 L440.8 547.2 L432.6 551.0 L425.6 556.1 L420.0 560.0 L413.4 569.6 L412.4 576.4 L411.3 581.2 L406.5 589.8 L400.7 594.5 L400.0 600.0 L394.8 607.5 L394.1 610.1 L386.7 615.4 L385.0 625.0" fill="none" stroke="#a2a6b0" stroke-width=".85"/>
<path d="M262.0 300.0 L255.7 291.0 L252.5 291.3 L247.8 280.7 L244.2 274.5 L240.0 270.0 L233.4 274.0 L221.1 273.2 L216.5 280.6 L207.0 280.0" fill="none" stroke="#a2a6b0" stroke-width=".85"/>
<path d="M330.0 470.0 L323.0 471.5 L317.3 470.5 L302.9 478.0 L297.4 474.8 L290.0 480.0 L282.3 481.4 L274.1 475.0 L263.2 471.0 L260.8 471.9 L250.0 470.0 L249.1 472.9 L240.2 478.9 L237.3 484.9 L232.3 493.4 L230.0 500.0 L221.0 498.5 L211.4 506.6 L207.0 505.0" fill="none" stroke="#a2a6b0" stroke-width=".85"/>
<path d="M207.0 598.0 L209.9 595.0 L212.1 593.6 L216.0 590.0 L219.7 589.0 L226.0 588.0 L230.0 582.9 L232.0 580.0 L235.8 578.6 L238.1 576.4 L243.0 575.0 L247.0 576.4 L250.0 578.0 L254.6 580.1 L258.0 584.0 L262.3 584.0 L268.0 586.0 L271.7 587.8 L275.6 588.0 L279.0 588.0 L278.7 593.1 L279.0 597.0 L275.5 600.0 L274.0 604.0 L277.5 608.6 L280.0 612.0 L284.1 612.6 L288.1 614.6 L293.0 617.0 L296.1 619.5 L299.6 621.3 L304.0 622.0 L308.5 621.6 L311.0 623.5" fill="none" stroke="#aca363" stroke-width="2.1" stroke-linejoin="round"/>
<path d="M207 640 L216 638 L224 646 L229 660 L222 672 L215 684 L222 694 L232 700 L240 712 L247 728 L252 742" fill="none" stroke="#c2c0b8" stroke-width="1.4"/>
<path d="M284.0 338.3 Q290.9 351.5 291.6 366.4 M402.1 394.7 Q413.9 393.7 425.5 390.9 M438.5 580.0 Q438.1 587.4 434.2 593.7 M553.4 474.5 Q540.8 462.2 523.8 457.7 M291.6 366.4 Q286.7 377.4 280.0 387.5 M428.0 553.7 Q436.4 552.4 444.4 549.6 M284.0 338.3 Q281.0 353.9 272.8 367.4 M432.0 441.0 Q443.7 448.1 456.2 453.6 M277.9 732.9 Q265.6 738.6 252.4 741.9 M434.0 524.2 Q429.9 531.7 424.8 538.7 M363.8 515.9 Q353.0 505.3 337.9 503.8 M458.8 560.1 Q463.2 565.9 470.2 567.7 M244.1 301.0 Q258.0 308.2 273.6 306.0 M317.5 361.1 Q314.9 350.0 307.6 341.0 M239.7 490.1 Q247.5 502.8 254.0 516.3 M276.7 593.0 Q283.9 581.1 296.3 574.8 M273.0 402.0 Q270.4 412.7 276.2 422.0 M610.5 382.0 Q611.5 392.3 618.9 399.6 M643.0 355.0 Q649.0 359.1 655.2 362.9 M276.7 593.0 Q263.1 588.6 252.1 579.3 M431.4 311.7 Q430.9 298.0 425.1 285.6 M257.1 372.6 Q264.2 367.5 272.8 367.4 M561.3 438.7 Q563.8 427.6 566.4 416.5 M607.4 334.5 Q614.2 337.2 621.0 334.7 M355.9 569.4 Q349.5 556.0 337.5 547.3 M608.0 463.5 Q617.9 458.2 627.0 451.8 M345.8 275.5 Q338.8 265.4 327.3 260.9 M594.9 405.9 Q599.2 399.0 606.3 395.0 M372.1 321.1 Q376.7 307.1 375.1 292.4 M252.4 741.9 Q232.4 739.0 212.5 741.6 M602.6 370.1 Q593.3 369.6 584.2 371.5 M643.0 355.0 Q647.0 344.3 649.7 333.2 M492.1 340.3 Q490.0 354.6 490.3 369.0 M224.8 395.8 Q232.6 390.5 241.9 389.3 M458.8 560.1 Q459.1 551.7 456.6 543.7 M517.0 382.8 Q529.0 381.2 539.1 374.6 M515.3 348.0 Q503.2 345.8 492.1 340.3 M517.0 382.8 Q518.3 396.2 518.9 409.5 M438.5 580.0 Q444.0 586.2 450.3 591.6 M252.1 579.3 Q248.9 593.8 239.4 605.2 M469.5 344.2 Q461.1 348.0 453.2 352.7 M260.9 268.2 Q247.4 270.6 235.9 263.2 M631.2 392.8 Q632.0 382.3 632.2 371.8 M287.2 452.5 Q274.0 454.8 261.5 459.8 M316.6 493.0 Q329.2 494.7 337.9 503.8 M345.8 275.5 Q334.4 280.0 326.7 289.5 M491.1 388.7 Q494.6 378.7 490.3 369.0 M359.5 492.5 Q371.3 492.5 382.9 490.3 M230.5 653.7 Q240.8 664.3 255.5 665.2 M456.6 543.7 Q450.9 538.9 445.6 533.7 M642.3 412.8 Q636.8 417.4 630.0 419.6 M424.8 538.7 Q418.0 539.7 413.1 544.6 M337.5 473.5 Q324.6 480.6 316.6 493.0 M569.1 368.8 Q576.6 370.4 584.2 371.5 M212.2 581.1 Q222.6 571.7 230.2 559.9 M517.0 382.8 Q505.2 391.0 491.1 388.7 M274.3 568.6 Q286.3 568.2 296.3 574.8 M576.5 331.5 Q586.0 332.4 593.5 326.4 M508.9 539.9 Q512.7 528.4 515.1 516.6 M613.9 289.8 Q619.2 294.5 620.9 301.4 M432.0 441.0 Q435.8 451.9 434.3 463.4 M462.5 603.0 Q470.0 600.0 475.2 593.9 M331.6 618.0 Q345.5 612.2 359.4 618.3 M342.6 305.6 Q337.7 294.6 326.7 289.5 M276.7 593.0 Q271.0 581.2 274.3 568.6 M536.0 270.3 Q524.1 276.9 513.4 285.2 M303.2 553.4 Q290.7 553.6 280.3 546.6 M643.0 355.0 Q635.4 362.0 632.2 371.8 M562.8 357.2 Q573.3 352.8 584.6 353.5 M412.0 370.9 Q421.5 379.1 425.5 390.9 M210.5 698.9 Q211.3 685.6 209.7 672.4 M434.9 370.7 Q443.8 379.0 448.5 390.2 M276.2 422.0 Q284.9 417.5 294.4 419.2 M254.0 516.3 Q250.4 529.1 243.3 540.4 M539.1 374.6 Q546.9 383.2 551.7 393.7 M537.5 338.0 Q550.6 347.1 562.8 357.2 M484.0 555.4 Q478.3 562.8 470.2 567.7 M607.4 334.5 Q611.0 326.6 608.0 318.5 M441.3 334.1 Q436.8 342.2 434.6 351.2 M594.3 301.2 Q600.3 310.5 608.0 318.5 M642.7 435.5 Q634.1 429.3 630.0 419.6 M610.5 432.6 Q595.6 433.3 585.3 444.1 M238.5 453.7 Q250.3 455.8 261.5 459.8 M317.5 588.5 Q304.0 586.2 296.3 574.8 M472.9 540.7 Q467.0 528.9 463.7 516.2 M444.4 549.6 Q446.6 541.8 445.6 533.7 M244.0 406.4 Q245.1 397.6 241.9 389.3 M458.8 560.1 Q462.1 547.7 472.9 540.7 M569.7 464.1 Q576.1 469.5 583.6 473.3 M495.8 566.5 Q491.5 559.2 484.0 555.4 M465.0 373.0 Q464.8 358.2 469.5 344.2 M337.5 547.3 Q333.7 558.8 330.5 570.6 M467.0 433.1 Q465.1 445.2 456.2 453.6 M282.9 519.5 Q269.1 511.9 254.0 516.3 M243.3 540.4 Q240.7 552.9 230.2 559.9 M244.1 301.0 Q249.8 313.3 246.1 326.3 M317.5 588.5 Q321.3 577.6 330.5 570.6 M557.2 260.0 Q548.4 268.9 536.0 270.3 M515.3 348.0 Q504.2 360.2 490.3 369.0 M355.9 569.4 Q343.2 569.1 330.5 570.6 M618.9 399.6 Q615.1 405.1 612.1 411.1 M504.7 317.0 Q494.9 326.8 492.1 340.3 M212.2 268.4 Q222.0 275.0 228.6 284.9 M450.5 413.9 Q436.7 415.8 423.0 413.9 M395.1 338.6 Q385.1 348.3 371.2 349.7 M403.1 557.4 Q406.1 549.4 413.1 544.6 M613.9 289.8 Q613.2 273.5 603.7 260.2 M211.5 374.0 Q218.5 367.0 227.1 361.9 M600.1 345.6 Q594.5 341.3 588.0 338.5 M243.3 540.4 Q226.9 535.4 214.4 523.7 M450.3 591.6 Q442.6 595.6 434.2 593.7 M219.5 336.2 Q220.1 350.0 227.1 361.9 M569.1 531.6 Q565.6 520.6 566.0 509.0 M244.8 354.8 Q238.9 348.8 235.5 341.2 M398.9 283.0 Q412.5 279.4 425.1 285.6 M475.2 593.9 Q485.5 590.0 490.5 580.3 M430.6 495.9 Q425.6 485.2 415.8 478.6 M656.0 396.8 Q650.9 388.9 642.0 385.5 M372.1 321.1 Q368.2 335.3 371.2 349.7 M598.6 495.9 Q591.1 504.5 586.3 514.9 M417.7 345.8 Q426.2 348.4 434.6 351.2 M322.1 315.3 Q323.8 302.3 326.7 289.5 M434.9 370.7 Q428.3 379.9 425.5 390.9 M450.5 413.9 Q461.9 409.1 473.2 404.3 M260.9 268.2 Q274.7 261.2 290.1 261.1 M211.5 374.0 Q220.4 374.4 227.6 379.6 M344.2 597.7 Q335.0 606.1 331.6 618.0 M472.2 288.9 Q461.0 279.2 446.2 279.1 M536.0 270.3 Q524.6 267.3 515.1 260.4 M330.5 340.4 Q342.5 337.8 350.5 328.5 M559.9 491.8 Q554.8 483.8 553.4 474.5 M320.0 397.0 Q307.7 402.6 294.2 401.8 M410.7 525.5 Q410.3 535.2 413.1 544.6 M212.5 300.7 Q228.3 295.5 244.1 301.0 M244.1 301.0 Q239.7 289.8 228.6 284.9 M374.6 376.1 Q359.6 377.3 345.8 383.2 M310.2 465.8 Q312.8 479.6 316.6 493.0 M428.0 553.7 Q420.0 550.1 413.1 544.6 M215.8 416.2 Q212.9 406.4 207.1 398.0 M492.1 340.3 Q481.1 344.0 469.5 344.2 M561.3 438.7 Q549.6 431.6 538.4 423.8 M337.5 473.5 Q322.6 474.2 310.2 465.8 M593.5 326.4 Q591.3 319.4 584.8 315.8 M538.4 512.0 Q527.5 518.3 515.1 516.6 M425.1 285.6 Q423.9 271.0 414.0 260.2 M258.1 709.7 Q245.2 719.4 229.1 720.9 M472.2 288.9 Q478.9 275.6 488.9 264.7 M375.7 602.9 Q386.6 598.1 397.7 593.5 M359.5 492.5 Q361.5 504.3 363.8 515.9 M395.1 338.6 Q402.2 328.3 409.9 318.5 M328.6 524.6 Q316.0 522.4 305.3 529.7 M273.6 306.0 Q285.7 308.0 298.1 307.5 M469.5 344.2 Q472.8 329.4 468.3 314.8 M229.1 720.9 Q241.4 730.6 252.4 741.9 M422.2 575.5 Q415.5 581.2 406.7 581.5 M612.1 411.1 Q610.7 402.5 606.3 395.0 M320.0 397.0 Q312.4 384.5 298.1 381.1 M555.1 521.8 Q560.8 515.7 566.0 509.0 M253.9 426.0 Q261.5 434.2 272.0 437.9 M215.8 416.2 Q220.1 405.9 224.8 395.8 M642.7 435.5 Q633.6 442.5 627.0 451.8 M610.0 356.3 Q605.7 350.4 600.1 345.6 M632.2 371.8 Q642.0 363.2 655.2 362.9 M274.5 484.0 Q279.9 467.8 287.2 452.5 M521.6 490.3 Q518.7 503.5 515.1 516.6 M236.6 691.6 Q222.2 683.4 209.7 672.4 M287.6 284.2 Q275.1 274.8 260.9 268.2 M375.7 602.9 Q369.1 620.7 366.2 639.6 M395.1 338.6 Q407.5 338.7 417.7 345.8 M621.1 320.4 Q618.7 327.6 621.0 334.7 M553.8 302.8 Q542.4 307.5 531.2 302.5 M224.8 395.8 Q227.2 387.9 227.6 379.6 M374.6 376.1 Q372.8 362.9 371.2 349.7 M211.8 474.0 Q229.2 476.0 239.7 490.1 M463.7 516.2 Q452.4 522.6 445.6 533.7 M211.8 474.0 Q216.1 487.9 208.8 500.6 M366.2 639.6 Q379.7 635.3 386.3 622.8 M276.7 593.0 Q290.4 597.6 301.6 606.7 M388.2 466.4 Q401.5 461.8 410.8 451.2 M438.5 580.0 Q440.0 572.1 445.8 566.6 M553.8 302.8 Q558.6 292.0 566.6 283.4 M569.1 531.6 Q575.6 521.1 586.3 514.9 M523.8 457.7 Q511.3 459.1 503.3 468.8 M402.1 394.7 Q411.8 405.1 423.0 413.9 M211.5 374.0 Q214.6 364.4 212.6 354.6 M569.1 531.6 Q561.9 526.9 555.1 521.8 M584.6 353.5 Q592.6 350.0 600.1 345.6 M219.5 336.2 Q214.5 344.8 212.6 354.6 M372.1 321.1 Q361.7 326.1 350.5 328.5 M516.6 575.1 Q504.4 582.2 490.5 580.3 M468.3 314.8 Q480.8 306.3 492.8 297.1 M643.0 355.0 Q648.5 351.5 653.8 347.7 M210.4 447.5 Q220.1 438.0 232.3 431.9 M210.9 545.9 Q227.1 543.3 243.3 540.4 M380.8 406.6 Q391.3 400.4 402.1 394.7 M562.8 357.2 Q554.8 371.0 539.1 374.6 M423.0 413.9 Q423.1 402.3 425.5 390.9 M230.5 653.7 Q242.7 642.1 253.3 629.1 M414.3 594.5 Q412.8 603.7 406.9 611.0 M446.0 605.5 Q438.8 600.9 434.2 593.7 M284.0 338.3 Q295.3 344.5 307.6 341.0 M586.5 384.8 Q578.8 385.3 572.7 390.1 M301.6 606.7 Q294.0 617.4 285.7 627.6 M257.1 372.6 Q254.5 361.2 244.8 354.8 M537.0 546.4 Q551.0 537.7 555.1 521.8 M212.2 581.1 Q209.5 598.7 214.4 615.9 M430.6 495.9 Q443.1 491.1 450.1 479.8 M236.6 691.6 Q250.0 681.3 255.5 665.2 M287.2 452.5 Q286.7 443.4 287.9 434.3 M581.7 400.5 Q576.0 410.3 566.4 416.5 M610.5 382.0 Q605.8 387.6 606.3 395.0 M257.1 372.6 Q252.8 383.5 257.6 394.2 M410.7 525.5 Q395.7 530.3 380.0 531.1 M523.8 457.7 Q521.0 473.9 521.6 490.3 M518.9 409.5 Q531.0 413.4 538.4 423.8 M655.2 362.9 Q653.9 355.3 653.8 347.7 M580.0 498.0 Q584.2 506.1 586.3 514.9 M551.7 393.7 Q562.1 391.3 572.7 390.1 M258.1 709.7 Q264.1 724.6 277.9 732.9 M434.0 524.2 Q441.6 526.6 445.6 533.7 M621.1 320.4 Q620.7 310.9 620.9 301.4 M504.7 317.0 Q501.9 305.2 492.8 297.1 M453.2 352.7 Q444.0 350.9 434.6 351.2 M495.3 489.8 Q497.7 478.7 503.3 468.8 M375.1 292.4 Q374.4 280.1 367.3 270.0 M618.9 399.6 Q611.6 399.9 606.3 395.0 M621.1 320.4 Q614.3 321.2 608.0 318.5 M208.8 500.6 Q215.3 511.2 214.4 523.7 M244.0 406.4 Q251.8 401.4 257.6 394.2 M219.5 336.2 Q230.6 325.4 246.1 326.3 M410.7 525.5 Q420.6 529.0 424.8 538.7 M274.5 484.0 Q271.3 470.1 261.5 459.8 M374.6 376.1 Q379.7 391.0 380.8 406.6 M397.3 569.0 Q393.8 575.2 390.2 581.3 M458.4 580.9 Q455.9 587.4 450.3 591.6 M610.0 356.3 Q617.0 357.1 622.0 362.0 M294.2 401.8 Q295.4 391.3 298.1 381.1 M608.0 463.5 Q603.1 470.9 600.2 479.2 M428.0 553.7 Q423.9 546.7 424.8 538.7 M330.5 340.4 Q337.2 349.8 340.5 360.8 M583.6 473.3 Q592.0 475.9 600.2 479.2 M538.4 423.8 Q551.3 415.8 566.4 416.5 M361.2 547.6 Q372.8 541.8 380.0 531.1 M345.4 407.7 Q330.8 410.3 320.1 420.4 M282.9 519.5 Q292.9 527.3 305.3 529.7 M446.0 605.5 Q447.5 598.4 450.3 591.6 M291.6 366.4 Q282.4 370.6 272.8 367.4 M564.4 340.2 Q576.4 341.8 588.0 338.5 M516.6 575.1 Q507.5 567.6 495.8 566.5 M366.2 639.6 Q367.1 627.5 359.4 618.3 M398.9 283.0 Q406.8 271.9 414.0 260.2 M410.7 525.5 Q422.5 528.2 434.0 524.2 M513.4 285.2 Q502.2 289.6 492.8 297.1 M388.2 466.4 Q377.0 463.6 365.8 460.6 M456.6 543.7 Q449.6 544.9 444.4 549.6 M414.3 594.5 Q412.4 586.9 406.7 581.5 M472.2 288.9 Q483.4 290.6 492.8 297.1 M211.8 474.0 Q205.4 461.0 210.4 447.5 M317.5 588.5 Q313.3 600.9 301.6 606.7 M495.3 489.8 Q508.4 493.9 521.6 490.3 M561.3 438.7 Q572.4 445.6 585.3 444.1 M495.8 566.5 Q493.3 573.5 490.5 580.3 M410.8 451.2 Q422.5 457.3 434.3 463.4 M589.2 280.6 Q591.3 291.0 594.3 301.2 M431.4 311.7 Q420.9 315.9 409.9 318.5 M397.3 569.0 Q399.3 577.3 406.7 581.5 M481.9 450.2 Q468.6 448.4 456.2 453.6 M280.0 387.5 Q279.8 376.3 272.8 367.4 M235.9 263.2 Q224.1 265.9 212.2 268.4 M345.8 275.5 Q356.9 274.2 367.3 270.0 M229.1 720.9 Q226.9 704.8 236.6 691.6 M472.9 540.7 Q478.2 548.2 484.0 555.4 M537.5 338.0 Q550.7 342.5 564.4 340.2 M472.2 288.9 Q465.5 278.7 466.1 266.5 M508.9 539.9 Q522.9 543.3 537.0 546.4 M553.4 474.5 Q547.2 484.2 542.6 494.7 M337.5 473.5 Q349.6 462.5 365.8 460.6 M569.7 464.1 Q579.4 455.6 585.3 444.1 M432.0 441.0 Q419.5 442.2 410.8 451.2 M594.3 301.2 Q590.9 278.8 603.7 260.2 M602.6 370.1 Q606.7 363.4 610.0 356.3 M458.4 580.9 Q462.1 572.3 470.2 567.7 M388.0 262.5 Q377.3 265.2 367.3 270.0 M450.1 479.8 Q460.9 486.3 470.5 494.5 M328.6 524.6 Q333.3 514.2 337.9 503.8 M589.2 280.6 Q572.6 271.2 557.2 260.0 M212.6 354.6 Q218.5 361.0 227.1 361.9 M211.5 374.0 Q204.6 385.1 207.1 398.0 M446.2 279.1 Q458.2 276.1 466.1 266.5 M287.2 452.5 Q279.2 445.7 272.0 437.9 M463.7 516.2 Q467.1 505.3 470.5 494.5 M621.1 320.4 Q628.7 323.9 633.7 330.6 M448.5 390.2 Q445.0 402.4 450.5 413.9 M210.9 545.9 Q211.3 563.5 212.2 581.1 M576.5 331.5 Q581.0 337.0 588.0 338.5 M559.9 491.8 Q551.6 495.4 542.6 494.7 M476.1 580.5 Q472.8 574.3 470.2 567.7 M580.0 498.0 Q589.2 495.8 598.6 495.9 M450.1 479.8 Q443.2 470.6 434.3 463.4 M359.5 492.5 Q352.5 478.3 337.5 473.5 M417.7 345.8 Q413.2 332.3 409.9 318.5 M344.2 597.7 Q353.4 606.8 359.4 618.3 M273.0 402.0 Q263.8 401.1 257.6 394.2 M219.5 336.2 Q227.5 338.8 235.5 341.2 M446.0 605.5 Q437.5 609.1 428.7 606.4 M308.2 275.7 Q298.7 282.0 287.6 284.2 M361.2 547.6 Q349.3 549.3 337.5 547.3 M562.8 357.2 Q564.9 348.8 564.4 340.2 M412.0 370.9 Q407.0 382.7 402.1 394.7 M580.0 498.0 Q574.2 505.0 566.0 509.0 M589.2 280.6 Q599.5 290.6 613.9 289.8 M210.9 545.9 Q219.0 555.1 230.2 559.9 M375.7 602.9 Q381.5 612.6 386.3 622.8 M479.1 473.6 Q490.3 466.6 503.3 468.8 M620.6 347.9 Q618.5 355.3 622.0 362.0 M406.3 500.3 Q412.6 490.1 415.8 478.6 M215.8 416.2 Q226.2 421.8 232.3 431.9 M508.9 539.9 Q495.1 545.5 484.0 555.4 M593.5 326.4 Q600.5 322.0 608.0 318.5 M448.5 390.2 Q463.6 392.5 473.2 404.3 M303.2 553.4 Q303.2 565.2 296.3 574.8 M342.6 305.6 Q330.5 306.5 322.1 315.3 M649.7 333.2 Q652.1 340.3 653.8 347.7 M292.2 497.3 Q304.4 495.0 316.6 493.0 M642.7 435.5 Q647.1 424.1 642.3 412.8 M607.4 334.5 Q600.0 331.3 593.5 326.4 M253.9 426.0 Q243.2 429.2 232.3 431.9 M492.4 514.6 Q503.7 516.1 515.1 516.6 M276.7 593.0 Q286.7 608.8 285.7 627.6 M491.1 388.7 Q482.6 397.0 473.2 404.3 M210.9 545.9 Q214.6 535.1 214.4 523.7 M253.3 629.1 Q247.8 647.6 255.5 665.2 M330.5 340.4 Q321.4 349.1 317.5 361.1 M569.1 368.8 Q573.2 379.1 572.7 390.1 M610.5 382.0 Q605.3 376.9 602.6 370.1 M224.8 395.8 Q216.2 398.5 207.1 398.0 M538.4 512.0 Q538.4 502.9 542.6 494.7 M282.9 519.5 Q276.2 532.5 280.3 546.6 M479.1 473.6 Q475.8 484.5 470.5 494.5 M557.2 260.0 Q559.7 272.6 566.6 283.4 M212.5 300.7 Q207.9 284.6 212.2 268.4 M320.0 397.0 Q324.2 408.7 320.1 420.4 M329.0 440.7 Q323.5 456.2 310.2 465.8 M345.8 383.2 Q339.5 372.9 340.5 360.8 M397.7 593.5 Q404.2 601.3 406.9 611.0 M594.9 405.9 Q589.2 401.1 581.7 400.5 M572.7 390.1 Q578.1 394.6 581.7 400.5 M230.5 653.7 Q216.8 659.4 209.7 672.4 M326.7 289.5 Q326.5 275.2 327.3 260.9 M253.3 629.1 Q269.8 633.7 285.7 627.6 M227.6 379.6 Q225.9 370.8 227.1 361.9 M521.6 490.3 Q531.4 495.9 542.6 494.7 M631.2 392.8 Q637.2 390.0 642.0 385.5 M434.9 370.7 Q437.6 360.9 434.6 351.2 M403.1 557.4 Q408.9 560.7 415.4 562.2 M282.9 519.5 Q285.4 507.5 292.2 497.3 M495.3 489.8 Q486.8 482.1 479.1 473.6 M584.6 353.5 Q586.6 346.1 588.0 338.5 M610.5 432.6 Q619.8 425.5 630.0 419.6 M329.0 440.7 Q344.9 440.9 360.5 438.2 M631.2 392.8 Q643.9 392.6 656.0 396.8 M273.0 402.0 Q277.3 395.2 280.0 387.5 M342.6 305.6 Q348.2 316.5 350.5 328.5 M330.5 340.4 Q318.9 336.2 307.6 341.0 M586.3 514.9 Q575.9 512.8 566.0 509.0 M241.9 389.3 Q248.9 394.7 257.6 394.2 M241.9 389.3 Q236.7 381.6 227.6 379.6 M538.4 512.0 Q532.1 529.0 537.0 546.4 M414.0 260.2 Q401.4 266.0 388.0 262.5 M620.6 347.9 Q623.4 341.4 621.0 334.7 M632.2 371.8 Q635.5 379.8 642.0 385.5 M274.5 484.0 Q286.3 486.8 292.2 497.3 M320.0 397.0 Q330.2 385.1 345.8 383.2 M375.7 602.9 Q367.6 610.6 359.4 618.3 M397.7 593.5 Q395.7 586.3 390.2 581.3 M294.4 419.2 Q290.8 426.6 287.9 434.3 M476.1 580.5 Q483.2 577.3 490.5 580.3 M390.5 434.0 Q404.2 438.4 410.8 451.2 M252.1 579.3 Q262.9 573.3 274.3 568.6 M406.3 500.3 Q393.0 499.1 382.9 490.3 M458.4 580.9 Q467.3 581.7 476.1 580.5 M495.3 489.8 Q492.6 502.0 492.4 514.6 M258.1 709.7 Q247.2 700.8 236.6 691.6 M610.0 356.3 Q615.4 352.3 620.6 347.9 M553.8 302.8 Q569.1 309.6 584.8 315.8 M390.5 434.0 Q389.3 419.0 380.8 406.6 M398.9 283.0 Q387.7 289.3 375.1 292.4 M622.0 362.0 Q625.9 368.2 632.2 371.8 M633.7 330.6 Q626.7 330.6 621.0 334.7 M504.0 427.0 Q521.1 424.9 538.4 423.8 M551.7 393.7 Q559.2 405.0 566.4 416.5 M586.5 384.8 Q587.5 393.7 581.7 400.5 M428.0 553.7 Q419.9 555.2 415.4 562.2 M472.9 540.7 Q464.8 542.7 456.6 543.7 M239.7 490.1 Q224.7 496.6 208.8 500.6 M317.5 361.1 Q329.1 365.6 340.5 360.8 M235.9 263.2 Q230.7 273.5 228.6 284.9 M294.4 419.2 Q293.5 410.5 294.2 401.8 M239.4 605.2 Q228.8 615.0 214.4 615.9 M397.7 593.5 Q401.3 586.8 406.7 581.5 M441.3 334.1 Q450.3 341.4 453.2 352.7 M488.9 264.7 Q477.2 261.6 466.1 266.5 M607.4 334.5 Q602.5 339.2 600.1 345.6 M446.0 605.5 Q454.1 603.1 462.5 603.0 M229.1 720.9 Q219.0 729.8 212.5 741.6 M428.7 606.4 Q418.1 609.8 406.9 611.0 M504.0 427.0 Q489.8 435.7 481.9 450.2 M238.5 453.7 Q224.0 452.4 210.4 447.5 M276.2 422.0 Q284.4 426.0 287.9 434.3 M492.4 514.6 Q477.8 512.0 463.7 516.2 M594.9 405.9 Q603.2 409.5 612.1 411.1 M280.0 387.5 Q285.6 396.1 294.2 401.8 M291.6 366.4 Q296.0 373.2 298.1 381.1 M613.9 289.8 Q605.4 297.8 594.3 301.2 M390.2 581.3 Q398.4 581.3 406.7 581.5 M589.2 280.6 Q578.3 284.9 566.6 283.4 M301.6 606.7 Q317.5 610.0 331.6 618.0 M244.0 406.4 Q234.5 400.8 224.8 395.8 M360.5 438.2 Q363.9 449.2 365.8 460.6 M584.6 353.5 Q582.5 362.5 584.2 371.5 M504.7 317.0 Q517.3 308.5 531.2 302.5 M481.9 450.2 Q475.4 461.3 479.1 473.6 M610.5 432.6 Q612.2 421.9 612.1 411.1 M397.7 593.5 Q406.2 590.7 414.3 594.5 M403.1 557.4 Q399.7 562.9 397.3 569.0 M531.2 302.5 Q520.4 295.8 513.4 285.2 M618.9 399.6 Q626.2 398.4 631.2 392.8 M258.1 709.7 Q261.6 726.9 252.4 741.9 M472.2 288.9 Q472.9 302.3 468.3 314.8 M465.0 373.0 Q461.3 361.6 453.2 352.7 M642.3 412.8 Q646.6 402.7 656.0 396.8 M280.0 387.5 Q288.6 383.1 298.1 381.1 M406.9 611.0 Q397.7 618.8 386.3 622.8 M287.6 284.2 Q288.1 272.6 290.1 261.1 M561.3 438.7 Q567.4 450.7 569.7 464.1 M586.5 384.8 Q583.9 378.4 584.2 371.5 M388.2 466.4 Q389.6 479.3 382.9 490.3 M294.4 419.2 Q307.2 420.8 320.1 420.4 M345.4 407.7 Q343.1 395.4 345.8 383.2 M287.6 284.2 Q294.1 295.3 298.1 307.5 M538.4 512.0 Q548.6 513.8 555.1 521.8 M363.8 515.9 Q375.1 520.1 380.0 531.1 M244.8 354.8 Q235.9 358.3 227.1 361.9 M328.6 524.6 Q328.4 537.8 337.5 547.3 M308.2 275.7 Q300.7 266.5 290.1 261.1 M446.2 279.1 Q435.3 281.3 425.1 285.6 M488.9 264.7 Q502.7 266.7 515.1 260.4 M261.5 459.8 Q270.3 450.6 272.0 437.9 M620.9 301.4 Q617.3 312.1 608.0 318.5 M317.5 588.5 Q331.8 590.4 344.2 597.7 M308.2 275.7 Q318.0 268.6 327.3 260.9 M610.5 432.6 Q618.9 442.1 627.0 451.8 M462.5 603.0 Q453.9 600.0 450.3 591.6 M576.5 331.5 Q568.8 333.6 564.4 340.2 M428.7 606.4 Q429.6 599.2 434.2 593.7 M434.3 463.4 Q423.3 468.9 415.8 478.6 M298.1 307.5 Q311.4 307.3 322.1 315.3 M448.5 390.2 Q437.0 391.6 425.5 390.9 M272.0 437.9 Q279.8 435.5 287.9 434.3 M430.6 495.9 Q419.3 502.4 406.3 500.3 M246.1 326.3 Q241.4 334.1 235.5 341.2 M244.0 406.4 Q246.5 417.4 253.9 426.0 M359.5 492.5 Q349.7 500.2 337.9 503.8 M458.8 560.1 Q451.2 561.3 445.8 566.6 M633.7 330.6 Q641.6 332.1 649.7 333.2 M569.1 368.8 Q564.5 363.8 562.8 357.2 M229.1 720.9 Q254.6 722.5 277.9 732.9 M422.2 575.5 Q421.0 567.7 415.4 562.2 M280.3 546.6 Q277.1 557.5 274.3 568.6 M584.8 315.8 Q586.8 306.7 594.3 301.2 M580.0 498.0 Q580.1 485.4 583.6 473.3 M212.5 300.7 Q220.5 292.7 228.6 284.9 M593.5 326.4 Q593.1 333.6 588.0 338.5 M504.0 427.0 Q508.5 415.7 518.9 409.5 M308.2 275.7 Q319.0 280.6 326.7 289.5 M445.8 566.6 Q445.3 558.1 444.4 549.6 M230.5 653.7 Q218.9 636.3 214.4 615.9 M553.4 474.5 Q563.0 471.5 569.7 464.1 M320.0 397.0 Q334.7 397.7 345.4 407.7 M589.2 280.6 Q592.2 267.3 603.7 260.2 M513.4 285.2 Q515.0 272.8 515.1 260.4 M438.5 580.0 Q430.1 578.5 422.2 575.5 M329.0 440.7 Q326.9 429.5 320.1 420.4 M450.5 413.9 Q461.1 421.4 467.0 433.1 M239.4 605.2 Q249.3 615.4 253.3 629.1 M361.2 547.6 Q362.7 559.5 355.9 569.4 M287.6 284.2 Q280.9 295.3 273.6 306.0 M434.9 370.7 Q423.5 374.3 412.0 370.9 M229.1 720.9 Q223.2 707.0 210.5 698.9 M598.6 495.9 Q602.9 487.9 600.2 479.2 M608.0 463.5 Q597.7 473.2 583.6 473.3 M428.7 606.4 Q421.9 600.0 414.3 594.5 M303.2 553.4 Q307.7 541.8 305.3 529.7 M210.5 698.9 Q219.9 719.8 212.5 741.6 M559.9 491.8 Q564.3 499.9 566.0 509.0 M612.1 411.1 Q621.4 414.6 630.0 419.6 M465.0 373.0 Q478.5 376.1 490.3 369.0 M431.4 311.7 Q433.4 324.2 441.3 334.1 M276.2 422.0 Q273.8 429.9 272.0 437.9 M537.5 338.0 Q526.0 342.1 515.3 348.0 M287.2 452.5 Q296.1 463.7 310.2 465.8 M475.2 593.9 Q474.2 587.1 476.1 580.5 M467.0 433.1 Q477.4 439.1 481.9 450.2 M516.6 575.1 Q522.8 557.9 537.0 546.4 M576.5 331.5 Q581.4 324.1 584.8 315.8 M412.0 370.9 Q420.0 359.5 417.7 345.8 M390.5 434.0 Q376.2 441.1 360.5 438.2 M398.9 283.0 Q395.2 271.8 388.0 262.5 M434.3 463.4 Q443.4 454.3 456.2 453.6 M236.6 691.6 Q222.0 689.6 210.5 698.9 M465.0 373.0 Q457.9 382.7 448.5 390.2 M238.5 453.7 Q236.8 442.4 232.3 431.9" fill="none" stroke="#fabb86" stroke-width="1.12" stroke-linejoin="round"/>
</g>
<path d="M646 528 L636 536 L626 548 L618 562 L614 578 L616 592 L621 600 M648 529 L652 538 M622 552 L628 556 M343 675 L355 670 L368 666 L378 670 L374 684 L366 698 L352 704 L338 700 L330 688 L335 678 L343 675 M343 675 L356 684 L366 698 M330 688 L345 686 L360 676 L368 666 M366 666 L362 652 L358 640 L362 628" fill="none" stroke="#fabd8a" stroke-width="1.1"/>
<path d="M864 287 L870 294 L880 298 L894 298 L901 306 L897 318 L892 330 L888 342 L876 346 L868 345 M870 294 L872 310 L868 328 L866 345 M856 300 L864 296 L870 294 M880 264 L890 270 L900 268 L913 262 M930 290 L925 300 L926 306 M940 285 L950 275 L962 272 L970 274 M944 290 L940 297" fill="none" stroke="#fabd8a" stroke-width="1.1"/>
<path d="M676.8 540.7 L673.9 568.5 M654.2 619 L635.5 642.5 M607.2 689.5 L594.2 715.5" stroke="#c9a84e" stroke-width="1.3" fill="none"/>
<path d="M640 372 L660 366 L678 362" stroke="#9aa3b5" stroke-width=".7" stroke-dasharray="5 3" fill="none"/><path d="M857 261 L851 278" stroke="#aab3c2" stroke-width="1.2"/>
<g font-size="10.8" fill="#3a3a3a" stroke="#eff3fb" stroke-width="1.6" paint-order="stroke" style="paint-order:stroke">
<circle cx="211.5" cy="374" r="2.9" fill="#fff" stroke="#e8413d" stroke-width=".9"/><circle cx="211.5" cy="374" r="1.4" fill="#e8413d"/>
<circle cx="273" cy="402" r="2.9" fill="#fff" stroke="#e8413d" stroke-width=".9"/><circle cx="273" cy="402" r="1.4" fill="#e8413d"/>
<circle cx="274.5" cy="484" r="2.9" fill="#fff" stroke="#e8413d" stroke-width=".9"/><circle cx="274.5" cy="484" r="1.4" fill="#e8413d"/>
<circle cx="465" cy="373" r="2.9" fill="#fff" stroke="#e8413d" stroke-width=".9"/><circle cx="465" cy="373" r="1.4" fill="#e8413d"/>
<circle cx="432" cy="441" r="2.9" fill="#fff" stroke="#e8413d" stroke-width=".9"/><circle cx="432" cy="441" r="1.4" fill="#e8413d"/>
<circle cx="504" cy="427" r="2.9" fill="#fff" stroke="#e8413d" stroke-width=".9"/><circle cx="504" cy="427" r="1.4" fill="#e8413d"/>
<circle cx="537.5" cy="338" r="2.9" fill="#fff" stroke="#e8413d" stroke-width=".9"/><circle cx="537.5" cy="338" r="1.4" fill="#e8413d"/>
<circle cx="576.5" cy="331.5" r="2.9" fill="#fff" stroke="#e8413d" stroke-width=".9"/><circle cx="576.5" cy="331.5" r="1.4" fill="#e8413d"/>
<circle cx="643" cy="355" r="2.9" fill="#fff" stroke="#e8413d" stroke-width=".9"/><circle cx="643" cy="355" r="1.4" fill="#e8413d"/>
<circle cx="610.5" cy="382" r="2.9" fill="#fff" stroke="#e8413d" stroke-width=".9"/><circle cx="610.5" cy="382" r="1.4" fill="#e8413d"/>
<circle cx="317.5" cy="588.5" r="2.9" fill="#fff" stroke="#e8413d" stroke-width=".9"/><circle cx="317.5" cy="588.5" r="1.4" fill="#e8413d"/>
<circle cx="438.5" cy="580" r="2.9" fill="#fff" stroke="#e8413d" stroke-width=".9"/><circle cx="438.5" cy="580" r="1.4" fill="#e8413d"/>
<circle cx="446" cy="605.5" r="2.9" fill="#fff" stroke="#e8413d" stroke-width=".9"/><circle cx="446" cy="605.5" r="1.4" fill="#e8413d"/>
<circle cx="462.5" cy="603" r="2.9" fill="#fff" stroke="#e8413d" stroke-width=".9"/><circle cx="462.5" cy="603" r="1.4" fill="#e8413d"/>
<circle cx="366.5" cy="665.5" r="2.9" fill="#fff" stroke="#e8413d" stroke-width=".9"/><circle cx="366.5" cy="665.5" r="1.4" fill="#e8413d"/>
<circle cx="252" cy="637.5" r="2.9" fill="#fff" stroke="#b5793a" stroke-width=".9"/><circle cx="252" cy="637.5" r="1.4" fill="#b5793a"/>
<circle cx="646" cy="528" r="2.9" fill="#fff" stroke="#e8413d" stroke-width=".9"/><circle cx="646" cy="528" r="1.4" fill="#e8413d"/>
<circle cx="339" cy="265" r="2.9" fill="#fff" stroke="#e8413d" stroke-width=".9"/><circle cx="339" cy="265" r="1.4" fill="#e8413d"/>
<text x="203" y="369.5">成都</text>
<text x="276" y="406">重庆</text>
<text x="265" y="479">贵阳</text>
<text x="440" y="377">武汉</text>
<text x="407" y="445">长沙</text>
<text x="494" y="440.5">南昌</text>
<text x="512" y="342">合肥</text>
<text x="566" y="327">南京</text>
<text x="633" y="350">上海</text>
<text x="601" y="395.5">杭州</text>
<text x="307" y="583">南宁</text>
<text x="429" y="575">广州</text>
<text x="420" y="609.5">澳门</text>
<text x="471" y="607">香港</text>
<text x="357" y="679">海口</text>
<text x="243" y="632.5">河内</text>
<text x="635" y="523.5">台北</text>
<text x="439" y="266">郑州</text><text x="563" y="503">福</text>
</g>
<g font-size="9.6" fill="#444" stroke="#eff3fb" stroke-width="1.4" style="paint-order:stroke">
<circle cx="865" cy="286.5" r="2.4" fill="#e07a1f"/>
<circle cx="894" cy="297.5" r="2.4" fill="#e07a1f"/>
<circle cx="850.5" cy="310.5" r="2.4" fill="#e07a1f"/>
<circle cx="871.5" cy="310" r="2.4" fill="#e07a1f"/>
<circle cx="868" cy="344.5" r="2.4" fill="#e07a1f"/>
<circle cx="942" cy="287.5" r="2.4" fill="#e07a1f"/>
<text x="857" y="282">福冈</text>
<text x="886" y="294">大分</text>
<text x="844" y="304.5">长崎</text>
<text x="864" y="304.5">熊本</text>
<text x="856" y="341">鹿儿岛</text>
<text x="934" y="282">高知</text>
<circle cx="914.5" cy="262.5" r="2.4" fill="#e07a1f"/>
</g>
<g font-size="10.4" fill="#5478b8"><text x="694" y="456.5">东海</text><text x="794" y="692.5">菲律宾海</text></g>
<path d="M588.9 514.2 L592.3 513.8 L611.1 500.6 L612.3 497.6 L604.6 491.7 L601.4 501.8 Z" fill="url(#shg)"/><path d="M588.4 514.3 C584.4 508.8 571.6999999999999 499.8 571.6999999999999 489.8 A16.7 16.7 0 1 1 605.1 489.8 C605.1 499.8 592.4 508.8 588.4 514.3 Z" fill="#d8372a" stroke="#fff" stroke-width=".8"/><circle cx="588.4" cy="489.8" r="10.9" fill="#fff"/><path d="M591.8 484.40000000000003 L584.1999999999999 490.2 L587.8 490.40000000000003 L585.0 495.6 L592.4 488.40000000000003 L589.0 488.40000000000003 Z" fill="#d8372a"/>
<path d="M568.9 559.6 L572.3 559.2 L591.1 546.0 L592.3 543.0 L584.6 537.1 L581.4 547.2 Z" fill="url(#shg)"/><path d="M568.4 559.7 C564.4 554.2 551.6999999999999 545.2 551.6999999999999 535.2 A16.7 16.7 0 1 1 585.1 535.2 C585.1 545.2 572.4 554.2 568.4 559.7 Z" fill="#d8372a" stroke="#fff" stroke-width=".8"/><circle cx="568.4" cy="535.2" r="10.9" fill="#fff"/><path d="M571.8 529.8000000000001 L564.1999999999999 535.6 L567.8 535.8000000000001 L565.0 541.0 L572.4 533.8000000000001 L569.0 533.8000000000001 Z" fill="#d8372a"/>
<rect x="207" y="725.5" width="584" height="13.5" fill="#fff" opacity=".7"/>
<text x="209.5" y="736.3" font-size="10.9" fill="#222" textLength="580" lengthAdjust="spacing">© 2023 Baidu - GS(2021)6026号 - 甲测资字11111342 - 京ICP证030173号 - Data © 百度智图 &amp; <tspan fill="#7b7fe0">OpenStreetMap</tspan> &amp; <tspan fill="#7b7fe0">HERE</tspan></text>
<g><text x="210.5" y="719.5" font-size="16" font-weight="700" fill="#e1251b" stroke="#fff" stroke-width="3" style="paint-order:stroke" letter-spacing="-.6">Bai</text>
<g fill="#2932e1" stroke="#fff" stroke-width="2.4" style="paint-order:stroke"><ellipse cx="243" cy="714" rx="8" ry="6.8"/><ellipse cx="235.3" cy="706.5" rx="2.3" ry="3"/><ellipse cx="240.2" cy="701.5" rx="2.3" ry="3"/><ellipse cx="246" cy="701.5" rx="2.3" ry="3"/><ellipse cx="250.8" cy="706.5" rx="2.3" ry="3"/></g>
<text x="237.6" y="718" font-size="8.5" font-weight="700" fill="#fff">du</text>
<text x="252.5" y="719" font-size="10.5" font-weight="700" fill="#e1251b" stroke="#fff" stroke-width="2.8" style="paint-order:stroke">地图</text></g>
</svg></div>
<div class="abs card" style="left:786px;top:117px;width:763.5px;height:527px;overflow:hidden">
<div class="abs ct" style="left:9.3px;top:12.4px">监测设备列表(</div>
<div class="abs hl" style="left:0;top:43.5px;width:764px"></div>
<svg class="abs" style="left:102px;top:12px" width="188" height="27" viewBox="0 0 188 27">
<rect x="4.0" y="0" width="12.8" height="13" fill="#8c9cf5"/>
<rect x="16.5" y="0" width="12.8" height="13" fill="#a3b0f6"/>
<rect x="29.0" y="0" width="12.8" height="13" fill="#b7c0f8"/>
<rect x="41.5" y="0" width="12.8" height="13" fill="#9aa8f5"/>
<rect x="54.0" y="0" width="12.8" height="13" fill="#aab5f7"/>
<rect x="66.5" y="0" width="12.8" height="13" fill="#c3caf9"/>
<rect x="79.0" y="0" width="12.8" height="13" fill="#8e9ef4"/>
<rect x="91.5" y="0" width="12.8" height="13" fill="#b0baf7"/>
<rect x="104.0" y="0" width="12.8" height="13" fill="#8c9cf5"/>
<rect x="116.5" y="0" width="12.8" height="13" fill="#a3b0f6"/>
<rect x="129.0" y="0" width="12.8" height="13" fill="#b7c0f8"/>
<rect x="141.5" y="0" width="12.8" height="13" fill="#9aa8f5"/>
<rect x="154.0" y="0" width="12.8" height="13" fill="#aab5f7"/>
<rect x="4.0" y="13" width="12.8" height="12" fill="#e3e6fc"/>
<rect x="16.5" y="13" width="12.8" height="12" fill="#eceefd"/>
<rect x="29.0" y="13" width="12.8" height="12" fill="#dde1fb"/>
<rect x="41.5" y="13" width="12.8" height="12" fill="#f1f2fe"/>
<rect x="54.0" y="13" width="12.8" height="12" fill="#e6e9fc"/>
<rect x="66.5" y="13" width="12.8" height="12" fill="#eef0fd"/>
<rect x="79.0" y="13" width="12.8" height="12" fill="#f5f6fe"/>
<rect x="91.5" y="13" width="12.8" height="12" fill="#e3e6fc"/>
<rect x="104.0" y="13" width="12.8" height="12" fill="#eceefd"/>
<rect x="116.5" y="13" width="12.8" height="12" fill="#dde1fb"/>
<rect x="129.0" y="13" width="12.8" height="12" fill="#f1f2fe"/>
<rect x="141.5" y="13" width="12.8" height="12" fill="#e6e9fc"/>
<rect x="154.0" y="13" width="12.8" height="12" fill="#eef0fd"/>
<rect x="160" y="0" width="26" height="13" fill="#e4e4e6"/><rect x="160" y="13" width="26" height="10" fill="#f1f1f3"/>
<path d="M0 2 L4 2 L4 10 L1 10 Z" fill="#2b44e8"/>
</svg>
<table class="abs" style="left:9.6px;top:54px;font-size:12.6px;table-layout:fixed;width:742.7px">
<colgroup><col style="width:41.5px"><col style="width:162.8px"><col style="width:145.4px"><col style="width:67.1px"><col style="width:66.2px"><col style="width:67px"><col style="width:127.7px"><col style="width:65px"></colgroup>
<thead><tr><th>序号</th><th>用能单位</th><th>设备名称</th><th>设备类型</th><th>生产厂家</th><th>是否合格</th><th>最近通讯时间</th><th>联网状态</th></tr></thead><tbody>
<tr><td>1</td><td>福州某某环保能源有限公司</td><td>1号厂用变</td><td>变压器</td><td>-</td><td>未诊断</td><td>2023-06-06 14:35:00</td><td>在线</td></tr>
<tr><td>2</td><td>福州某某环保能源有限公司</td><td>2号厂用变</td><td>变压器</td><td>-</td><td>未诊断</td><td>2023-06-06 14:35:00</td><td>在线</td></tr>
<tr><td>3</td><td>福州某某环保能源有限公司</td><td>1号联络柜</td><td>联络柜</td><td>-</td><td>未诊断</td><td>2023-06-06 14:35:00</td><td>在线</td></tr>
<tr><td>4</td><td>福州某某环保能源有限公司</td><td>1期垃圾吊1号料口</td><td>吊车</td><td>-</td><td>未诊断</td><td>2023-05-27 07:58:20</td><td class="off">离线</td></tr>
<tr><td>5</td><td>福州某某环保能源有限公司</td><td>1期垃圾吊2号料口</td><td>吊车</td><td>-</td><td>未诊断</td><td>2023-06-02 16:08:00</td><td class="off">离线</td></tr>
<tr><td>6</td><td>福州某某环保能源有限公司</td><td>3号厂用变</td><td>变压器</td><td>-</td><td>未诊断</td><td>2023-06-06 14:35:00</td><td>在线</td></tr>
<tr><td>7</td><td>福州某某环保能源有限公司</td><td>2号联络柜</td><td>联络柜</td><td>-</td><td>未诊断</td><td>2023-06-06 14:35:00</td><td>在线</td></tr>
<tr><td>8</td><td>福州某某环保能源有限公司</td><td>2期垃圾吊料口</td><td>吊车</td><td>-</td><td>未诊断</td><td>2023-06-05 16:07:00</td><td class="off">离线</td></tr>
<tr><td>9</td><td>福州某某环保能源有限公司</td><td>1号炉</td><td>锅炉</td><td>-</td><td>未诊断</td><td>2023-06-06 14:35:00</td><td>在线</td></tr>
<tr><td>10</td><td>福州某某环保能源有限公司</td><td>2号炉</td><td>锅炉</td><td>-</td><td>未诊断</td><td>2023-06-06 14:35:00</td><td>在线</td></tr>
<tr><td>11</td><td>福州某某环保能源有限公司</td><td>3号炉</td><td>锅炉</td><td>-</td><td>未诊断</td><td>2023-06-06 14:35:00</td><td>在线</td></tr>
<tr><td>12</td><td>福州某某环保能源有限公司</td><td>1号汽机</td><td>汽轮机</td><td>-</td><td>未诊断</td><td>2023-06-06 14:35:00</td><td>在线</td></tr>
<tr><td>13</td><td>福州某某环保能源有限公司</td><td>2号汽机</td><td>汽轮机</td><td>-</td><td>未诊断</td><td>2023-06-06 14:35:00</td><td>在线</td></tr>
<tr><td>14</td><td>福州某某环保能源有限公司</td><td>1号发电机</td><td>发电机</td><td>-</td><td>未诊断</td><td>2023-06-06 14:35:00</td><td>在线</td></tr>
<tr><td>15</td><td>福州某某环保能源有限公司</td><td>2号发电机</td><td>发电机</td><td>-</td><td>未诊断</td><td>2023-06-06 14:35:00</td><td>在线</td></tr>
</tbody></table>
<svg class="abs" style="left:76px;top:82px" width="80" height="430" viewBox="1060 297 80 430">
<rect x="1072.0" y="295.7" width="10.9" height="16.2" fill="#f4f4f4"/>
<rect x="1082.5" y="295.7" width="10.9" height="16.2" fill="#ebebeb"/>
<rect x="1093.0" y="295.7" width="10.9" height="16.2" fill="#f8f8f8"/>
<rect x="1103.5" y="295.7" width="10.9" height="16.2" fill="#efefef"/>
<rect x="1066.0" y="311.7" width="12.9" height="12.6" fill="#d6d6d4"/>
<rect x="1078.5" y="311.7" width="12.9" height="12.6" fill="#d0d0ce"/>
<rect x="1091.0" y="311.7" width="12.9" height="12.6" fill="#c6c5c6"/>
<rect x="1103.5" y="311.7" width="12.9" height="12.6" fill="#c6c5c6"/>
<rect x="1068.0" y="323.9" width="12.4" height="16.2" fill="#ebebeb"/>
<rect x="1080.0" y="323.9" width="12.4" height="16.2" fill="#f8f8f8"/>
<rect x="1092.0" y="323.9" width="12.4" height="16.2" fill="#efefef"/>
<rect x="1104.0" y="323.9" width="12.4" height="16.2" fill="#e6e6e6"/>
<rect x="1066.0" y="339.9" width="12.4" height="12.6" fill="#bcb9bc"/>
<rect x="1078.0" y="339.9" width="12.4" height="12.6" fill="#c6c5c6"/>
<rect x="1090.0" y="339.9" width="12.4" height="12.6" fill="#a8a4a9"/>
<rect x="1102.0" y="339.9" width="12.4" height="12.6" fill="#d0d0ce"/>
<rect x="1071.0" y="352.1" width="12.4" height="16.2" fill="#f8f8f8"/>
<rect x="1083.0" y="352.1" width="12.4" height="16.2" fill="#efefef"/>
<rect x="1095.0" y="352.1" width="12.4" height="16.2" fill="#e6e6e6"/>
<rect x="1107.0" y="352.1" width="12.4" height="16.2" fill="#f4f4f4"/>
<rect x="1065.0" y="368.1" width="12.4" height="12.6" fill="#a8a4a9"/>
<rect x="1077.0" y="368.1" width="12.4" height="12.6" fill="#a8a4a9"/>
<rect x="1089.0" y="368.1" width="12.4" height="12.6" fill="#bcb9bc"/>
<rect x="1101.0" y="368.1" width="12.4" height="12.6" fill="#d6d6d4"/>
<rect x="1064.0" y="380.3" width="13.9" height="16.2" fill="#efefef"/>
<rect x="1077.5" y="380.3" width="13.9" height="16.2" fill="#e6e6e6"/>
<rect x="1091.0" y="380.3" width="13.9" height="16.2" fill="#f4f4f4"/>
<rect x="1104.5" y="380.3" width="13.9" height="16.2" fill="#ebebeb"/>
<rect x="1064.0" y="396.3" width="13.9" height="12.6" fill="#d0d0ce"/>
<rect x="1077.5" y="396.3" width="13.9" height="12.6" fill="#c6c5c6"/>
<rect x="1091.0" y="396.3" width="13.9" height="12.6" fill="#c6c5c6"/>
<rect x="1104.5" y="396.3" width="13.9" height="12.6" fill="#d0d0ce"/>
<rect x="1067.0" y="408.5" width="10.9" height="16.2" fill="#e6e6e6"/>
<rect x="1077.5" y="408.5" width="10.9" height="16.2" fill="#f4f4f4"/>
<rect x="1088.0" y="408.5" width="10.9" height="16.2" fill="#ebebeb"/>
<rect x="1098.5" y="408.5" width="10.9" height="16.2" fill="#f8f8f8"/>
<rect x="1067.0" y="424.5" width="12.9" height="12.6" fill="#c6c5c6"/>
<rect x="1079.5" y="424.5" width="12.9" height="12.6" fill="#d0d0ce"/>
<rect x="1092.0" y="424.5" width="12.9" height="12.6" fill="#dadad8"/>
<rect x="1104.5" y="424.5" width="12.9" height="12.6" fill="#dadad8"/>
<rect x="1068.0" y="436.7" width="12.9" height="16.2" fill="#f4f4f4"/>
<rect x="1080.5" y="436.7" width="12.9" height="16.2" fill="#ebebeb"/>
<rect x="1093.0" y="436.7" width="12.9" height="16.2" fill="#f8f8f8"/>
<rect x="1105.5" y="436.7" width="12.9" height="16.2" fill="#efefef"/>
<rect x="1064.0" y="452.7" width="12.9" height="12.6" fill="#bcb9bc"/>
<rect x="1076.5" y="452.7" width="12.9" height="12.6" fill="#b2afb3"/>
<rect x="1089.0" y="452.7" width="12.9" height="12.6" fill="#b2afb3"/>
<rect x="1101.5" y="452.7" width="12.9" height="12.6" fill="#d0d0ce"/>
<rect x="1070.0" y="464.9" width="10.9" height="16.2" fill="#ebebeb"/>
<rect x="1080.5" y="464.9" width="10.9" height="16.2" fill="#f8f8f8"/>
<rect x="1091.0" y="464.9" width="10.9" height="16.2" fill="#efefef"/>
<rect x="1101.5" y="464.9" width="10.9" height="16.2" fill="#e6e6e6"/>
<rect x="1064.0" y="480.9" width="12.9" height="12.6" fill="#c6c5c6"/>
<rect x="1076.5" y="480.9" width="12.9" height="12.6" fill="#d6d6d4"/>
<rect x="1089.0" y="480.9" width="12.9" height="12.6" fill="#d0d0ce"/>
<rect x="1101.5" y="480.9" width="12.9" height="12.6" fill="#dadad8"/>
<rect x="1071.0" y="493.1" width="13.4" height="16.2" fill="#f8f8f8"/>
<rect x="1084.0" y="493.1" width="13.4" height="16.2" fill="#efefef"/>
<rect x="1097.0" y="493.1" width="13.4" height="16.2" fill="#e6e6e6"/>
<rect x="1110.0" y="493.1" width="13.4" height="16.2" fill="#f4f4f4"/>
<rect x="1067.0" y="509.1" width="13.4" height="12.6" fill="#d6d6d4"/>
<rect x="1080.0" y="509.1" width="13.4" height="12.6" fill="#dadad8"/>
<rect x="1093.0" y="509.1" width="13.4" height="12.6" fill="#dadad8"/>
<rect x="1106.0" y="509.1" width="13.4" height="12.6" fill="#c6c5c6"/>
<rect x="1070.0" y="521.3" width="11.9" height="16.2" fill="#efefef"/>
<rect x="1081.5" y="521.3" width="11.9" height="16.2" fill="#e6e6e6"/>
<rect x="1093.0" y="521.3" width="11.9" height="16.2" fill="#f4f4f4"/>
<rect x="1104.5" y="521.3" width="11.9" height="16.2" fill="#ebebeb"/>
<rect x="1066.0" y="537.3" width="13.9" height="12.6" fill="#dadad8"/>
<rect x="1079.5" y="537.3" width="13.9" height="12.6" fill="#c6c5c6"/>
<rect x="1093.0" y="537.3" width="13.9" height="12.6" fill="#d0d0ce"/>
<rect x="1106.5" y="537.3" width="13.9" height="12.6" fill="#d0d0ce"/>
<rect x="1069.0" y="549.5" width="7.9" height="16.2" fill="#e6e6e6"/>
<rect x="1076.5" y="549.5" width="7.9" height="16.2" fill="#f4f4f4"/>
<rect x="1084.0" y="549.5" width="7.9" height="16.2" fill="#ebebeb"/>
<rect x="1091.5" y="549.5" width="7.9" height="16.2" fill="#f8f8f8"/>
<rect x="1067.0" y="565.5" width="8.9" height="12.6" fill="#c6c5c6"/>
<rect x="1075.5" y="565.5" width="8.9" height="12.6" fill="#d0d0ce"/>
<rect x="1084.0" y="565.5" width="8.9" height="12.6" fill="#dadad8"/>
<rect x="1092.5" y="565.5" width="8.9" height="12.6" fill="#b2afb3"/>
<rect x="1071.0" y="577.7" width="6.9" height="16.2" fill="#f4f4f4"/>
<rect x="1077.5" y="577.7" width="6.9" height="16.2" fill="#ebebeb"/>
<rect x="1084.0" y="577.7" width="6.9" height="16.2" fill="#f8f8f8"/>
<rect x="1090.5" y="577.7" width="6.9" height="16.2" fill="#efefef"/>
<rect x="1067.0" y="593.7" width="8.9" height="12.6" fill="#bcb9bc"/>
<rect x="1075.5" y="593.7" width="8.9" height="12.6" fill="#c6c5c6"/>
<rect x="1084.0" y="593.7" width="8.9" height="12.6" fill="#d6d6d4"/>
<rect x="1092.5" y="593.7" width="8.9" height="12.6" fill="#bcb9bc"/>
<rect x="1067.0" y="605.9" width="6.4" height="16.2" fill="#ebebeb"/>
<rect x="1073.0" y="605.9" width="6.4" height="16.2" fill="#f8f8f8"/>
<rect x="1079.0" y="605.9" width="6.4" height="16.2" fill="#efefef"/>
<rect x="1085.0" y="605.9" width="6.4" height="16.2" fill="#e6e6e6"/>
<rect x="1067.0" y="621.9" width="7.4" height="12.6" fill="#c6c5c6"/>
<rect x="1074.0" y="621.9" width="7.4" height="12.6" fill="#d0d0ce"/>
<rect x="1081.0" y="621.9" width="7.4" height="12.6" fill="#dadad8"/>
<rect x="1088.0" y="621.9" width="7.4" height="12.6" fill="#dadad8"/>
<rect x="1073.0" y="634.1" width="6.4" height="16.2" fill="#f8f8f8"/>
<rect x="1079.0" y="634.1" width="6.4" height="16.2" fill="#efefef"/>
<rect x="1085.0" y="634.1" width="6.4" height="16.2" fill="#e6e6e6"/>
<rect x="1091.0" y="634.1" width="6.4" height="16.2" fill="#f4f4f4"/>
<rect x="1067.0" y="650.1" width="7.4" height="12.6" fill="#bcb9bc"/>
<rect x="1074.0" y="650.1" width="7.4" height="12.6" fill="#dadad8"/>
<rect x="1081.0" y="650.1" width="7.4" height="12.6" fill="#d6d6d4"/>
<rect x="1088.0" y="650.1" width="7.4" height="12.6" fill="#a8a4a9"/>
<rect x="1068.0" y="662.3" width="14.2" height="16.2" fill="#efefef"/>
<rect x="1081.8" y="662.3" width="14.2" height="16.2" fill="#e6e6e6"/>
<rect x="1095.6" y="662.3" width="14.2" height="16.2" fill="#f4f4f4"/>
<rect x="1109.4" y="662.3" width="14.2" height="16.2" fill="#ebebeb"/>
<rect x="1123.2" y="662.3" width="14.2" height="16.2" fill="#f8f8f8"/>
<rect x="1064.0" y="678.3" width="14.2" height="12.6" fill="#c6c5c6"/>
<rect x="1077.8" y="678.3" width="14.2" height="12.6" fill="#c6c5c6"/>
<rect x="1091.6" y="678.3" width="14.2" height="12.6" fill="#d0d0ce"/>
<rect x="1105.4" y="678.3" width="14.2" height="12.6" fill="#bcb9bc"/>
<rect x="1119.2" y="678.3" width="14.2" height="12.6" fill="#b2afb3"/>
<rect x="1068.0" y="690.5" width="11.9" height="16.2" fill="#e6e6e6"/>
<rect x="1079.5" y="690.5" width="11.9" height="16.2" fill="#f4f4f4"/>
<rect x="1091.0" y="690.5" width="11.9" height="16.2" fill="#ebebeb"/>
<rect x="1102.5" y="690.5" width="11.9" height="16.2" fill="#f8f8f8"/>
<rect x="1066.0" y="706.5" width="12.9" height="12.6" fill="#a8a4a9"/>
<rect x="1078.5" y="706.5" width="12.9" height="12.6" fill="#bcb9bc"/>
<rect x="1091.0" y="706.5" width="12.9" height="12.6" fill="#dadad8"/>
<rect x="1103.5" y="706.5" width="12.9" height="12.6" fill="#c6c5c6"/>
</svg>
<div class="abs" style="left:744.5px;top:88px;width:8px;height:423px;background:#fff"></div>
<div class="abs" style="left:746.5px;top:89px;width:5.5px;height:125px;background:#a3a3a3;border-radius:3px"></div>
<div class="abs" style="left:10.5px;top:511.5px;width:742px;height:8px;background:#fff"></div>
<div class="abs" style="left:10.5px;top:512px;width:729px;height:5.8px;background:#a3a3a3;border-radius:3px"></div>
</div>
<div class="abs card" style="left:9px;top:654px;width:375px;height:110px;overflow:hidden">
  <div class="abs ct" style="left:9.3px;top:12.4px">设备状态</div>
  <div class="abs hl" style="left:0;top:44px;width:375px"></div>
  <svg class="abs" style="left:0;top:54px" width="375" height="60" viewBox="207 806 375 60" font-family="Liberation Sans,Noto Sans CJK SC,sans-serif">
    <defs><filter id="gl" x="-30%" y="-30%" width="160%" height="160%"><feGaussianBlur stdDeviation="7"/></filter></defs>
    <path filter="url(#gl)" d="M358.6 815 A82.5 82.5 0 0 0 276.1 897.5 L295.1 897.5 A63.5 63.5 0 0 1 358.6 834 Z" fill="#22b522"/>
    <path d="M360 815 A82.5 82.5 0 0 0 276.1 897.5 L295.1 897.5 A63.5 63.5 0 0 1 360 834 Z" fill="#22b522"/>
    <path filter="url(#gl)" d="M358.6 815 A82.5 82.5 0 0 1 441.1 897.5 L422.1 897.5 A63.5 63.5 0 0 0 358.6 834 Z" fill="#bc1679"/>
    <path d="M359 815 A82.5 82.5 0 0 1 441.1 897.5 L422.1 897.5 A63.5 63.5 0 0 0 358.4 834 L349.5 824.3 Z" fill="#bc1679"/>
    <rect x="469.7" y="810.5" width="22.6" height="12.2" rx="3" fill="#22b522"/>
    <rect x="469.7" y="841.5" width="22.6" height="12.2" rx="3" fill="#bc1679"/>
    <text x="497.5" y="819.6" font-size="10.8" fill="#333">在线</text>
    <text x="497.5" y="850.6" font-size="10.8" fill="#333">离线</text>
  </svg>
</div>
<div class="abs card" style="left:397.5px;top:654px;width:1160px;height:110px;overflow:hidden">
  <svg class="abs" style="left:4px;top:15px" width="156" height="22" viewBox="0 0 156 22">
    <g id="mz"></g>
    <rect x="0" y="1" width="13" height="10" fill="#aab4f6"/><rect x="13" y="1" width="12" height="10" fill="#8e9df3"/><rect x="25" y="1" width="12" height="10" fill="#9eacf5"/><rect x="37" y="1" width="12" height="10" fill="#b3bdf7"/><rect x="49" y="1" width="12" height="10" fill="#8797f2"/><rect x="61" y="1" width="12" height="10" fill="#9caaf5"/><rect x="73" y="1" width="12" height="10" fill="#a1aef5"/><rect x="85" y="1" width="12" height="10" fill="#9dabf5"/><rect x="97" y="1" width="12" height="10" fill="#aeb8f6"/><rect x="109" y="1" width="12" height="10" fill="#909ff3"/><rect x="121" y="1" width="12" height="10" fill="#a9b4f6"/><rect x="133" y="1" width="12" height="10" fill="#8e9df3"/><rect x="145" y="1" width="8" height="10" fill="#a3b0f5"/>
    <rect x="0" y="11" width="13" height="10" fill="#dfe3fc"/><rect x="13" y="11" width="12" height="10" fill="#d3d9fa"/><rect x="25" y="11" width="12" height="10" fill="#e4e7fc"/><rect x="37" y="11" width="12" height="10" fill="#eceefd"/><rect x="49" y="11" width="12" height="10" fill="#dbe0fb"/><rect x="61" y="11" width="12" height="10" fill="#e3e6fc"/><rect x="73" y="11" width="12" height="10" fill="#e0e4fc"/><rect x="85" y="11" width="12" height="10" fill="#e6e9fc"/><rect x="97" y="11" width="12" height="10" fill="#dce1fb"/><rect x="109" y="11" width="12" height="10" fill="#d9defb"/><rect x="121" y="11" width="12" height="10" fill="#ebedfd"/><rect x="133" y="11" width="12" height="10" fill="#d2d8fa"/><rect x="145" y="11" width="8" height="10" fill="#d6dcfa"/>
  </svg>
  <div class="abs" style="left:157px;top:14.5px;font-size:14.4px;line-height:20px;font-weight:700;color:#1b37f0;white-space:nowrap">公司：</div>
  <div class="abs" style="left:202.5px;top:9px;width:127.5px;height:30.5px;border:1px solid #767676;border-radius:3px;background:#fff;overflow:hidden">
    <div class="abs" style="left:4px;top:4px;font-size:14.4px;line-height:20px;color:#111;white-space:nowrap;width:106.5px;overflow:hidden">全厂生活垃圾用量</div>
    <svg class="abs" style="left:113px;top:11px" width="10" height="7" viewBox="0 0 10 7"><path d="M1 1.2 L5 5.2 L9 1.2" fill="none" stroke="#222" stroke-width="1.7"/></svg>
  </div>
  <div class="abs hl" style="left:0;top:45px;width:1160px"></div>
  <svg class="abs" style="left:0;top:46px" width="1160" height="64" viewBox="595.5 798 1160 64" font-family="Liberation Sans,Noto Sans CJK SC,sans-serif">
    <text x="983.7" y="824.6" font-size="18" fill="#222" textLength="380" lengthAdjust="spacing">2023-05-06~2023-06-06全厂生活垃圾用量(t)</text>
    <path d="M1117 843.5 H1140" stroke="#22b522" stroke-width="1.3"/><circle cx="1128.5" cy="843.5" r="4.2" fill="#22b522"/>
    <text x="1144" y="847.2" font-size="10.8" fill="#333">全厂生活垃圾用量</text>
    <text x="649" y="845" font-size="10.8" fill="#333">t</text>
    <g fill="none" stroke="#777" stroke-width="1">
      <path d="M1673 821.5 L1677 821.5 L1679 815 L1681.5 825 L1683 820 L1687 821.5 M1672.5 827.5 H1687.5"/>
      <path d="M1698.5 827.5 H1713 M1700.5 825 V820 H1703 V825 Z M1705 825 V817 H1707.5 V825 Z M1709.5 825 V814.5 H1712 V825 Z"/>
      <path d="M1730.5 813 V824 M1725.5 819.5 L1730.5 824.5 L1735.5 819.5 M1723.5 824.5 V827.5 H1737.5 V824.5"/>
    </g>
  </svg>
</div>
</div>
<div id="foot" class="abs">
  <div class="abs" style="left:682.5px;top:8.5px;color:#777;white-space:nowrap">© 技术支持 <span style="color:#337ab7;margin-left:4.5px;font-size:11.85px">福建省计量科学研究院</span></div>
</div>
</body>
</html>
